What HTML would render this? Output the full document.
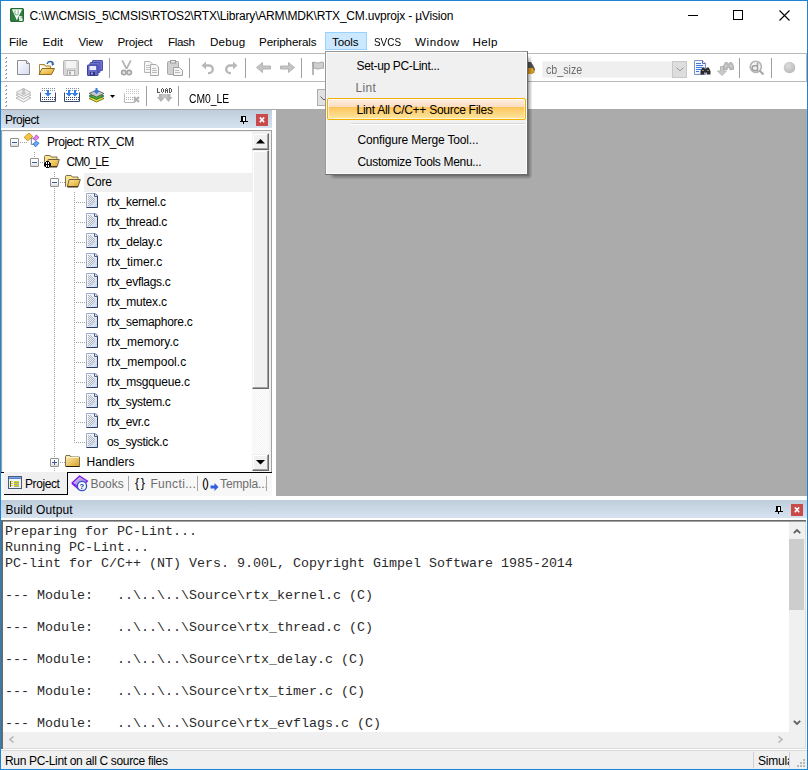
<!DOCTYPE html><html><head><meta charset="utf-8"><style>
*{margin:0;padding:0;box-sizing:border-box}
html,body{width:808px;height:770px;overflow:hidden;background:#fff}
body{font-family:"Liberation Sans",sans-serif;font-size:12px;color:#000;position:relative}
.a{position:absolute}
.t{position:absolute;white-space:nowrap;line-height:14px;font-size:12px}
.mono{position:absolute;font-family:"Liberation Mono",monospace;font-size:13.33px;line-height:16px;white-space:pre;color:#2a2a2a}
svg{position:absolute;overflow:visible}
</style></head><body>
<div class="a" style="left:0;top:0;width:808px;height:770px;border:1px solid #1c84d6;z-index:50;pointer-events:none"></div>
<svg style="left:10px;top:8px" width="14" height="14" viewBox="0 0 14 14"><rect x="0" y="0" width="14" height="14" rx="2" fill="#2f7d3d"/><rect x="0.5" y="0.5" width="13" height="13" rx="1.5" fill="none" stroke="#236b30"/><path d="M2 1.3h10.2L6.8 12.2z" fill="#fafdfa"/><path d="M5 2.2v4M8.2 2.2v4M5 6.2q1.6 1.6 3.2 0" fill="none" stroke="#7fb58a" stroke-width="1.1"/><path d="M12.2 8.9H9.7V10.8H11.9V12.4H9.2" fill="none" stroke="#fff" stroke-width="1.3"/></svg>
<div class="t" id="t1" style="left:29.5px;top:9px;font-size:12px;letter-spacing:-0.197px;">C:\W\CMSIS_5\CMSIS\RTOS2\RTX\Library\ARM\MDK\RTX_CM.uvprojx - µVision</div>
<div class="a" style="left:688px;top:15px;width:10px;height:1px;background:#000;"></div>
<div class="a" style="left:733px;top:10px;width:10px;height:10px;border:1px solid #000"></div>
<svg style="left:779px;top:10px" width="11" height="11" viewBox="0 0 11 11"><path d="M0.5 0.5L10.5 10.5M10.5 0.5L0.5 10.5" stroke="#000" stroke-width="1.1"/></svg>
<div class="a" style="left:325px;top:32px;width:42px;height:18px;background:#cce8ff;border:1px solid #99d1ff"></div>
<div class="t" id="t2" style="left:9.0px;top:35px;font-size:11.6px;letter-spacing:0.000px;">File</div>
<div class="t" id="t3" style="left:42.5px;top:35px;font-size:11.6px;letter-spacing:0.167px;">Edit</div>
<div class="t" id="t4" style="left:78.5px;top:35px;font-size:11.6px;letter-spacing:-0.167px;">View</div>
<div class="t" id="t5" style="left:117.5px;top:35px;font-size:11.6px;letter-spacing:-0.167px;">Project</div>
<div class="t" id="t6" style="left:168.0px;top:35px;font-size:11.6px;letter-spacing:-0.375px;">Flash</div>
<div class="t" id="t7" style="left:210.0px;top:35px;font-size:11.6px;letter-spacing:0.250px;">Debug</div>
<div class="t" id="t8" style="left:259.0px;top:35px;font-size:11.6px;letter-spacing:-0.100px;">Peripherals</div>
<div class="t" id="t9" style="left:332.0px;top:35px;font-size:11.6px;letter-spacing:-0.125px;">Tools</div>
<div class="t" id="t10" style="left:415.0px;top:35px;font-size:11.6px;letter-spacing:0.600px;">Window</div>
<div class="t" id="t11" style="left:472.5px;top:35px;font-size:11.6px;letter-spacing:0.334px;">Help</div>
<div class="t" id="t12" style="left:374px;top:35px;font-size:11.6px;transform:scaleX(0.855);transform-origin:0 0;">SVCS</div>
<div class="a" style="left:1px;top:53px;width:806px;height:1px;background:#b9b9b9;"></div>
<div class="a" style="left:1px;top:81px;width:805px;height:1px;background:#b9b9b9;"></div>
<div class="a" style="left:806px;top:53px;width:1px;height:29px;background:#b9b9b9;"></div>
<div class="a" style="left:1px;top:108px;width:806px;height:1px;background:#ffffff;"></div>
<div class="a" style="left:6px;top:57px;width:1px;height:1px;background:#8a8a8a;"></div>
<div class="a" style="left:5px;top:58px;width:1px;height:1px;background:#b0b0b0;"></div>
<div class="a" style="left:6px;top:58px;width:1px;height:1px;background:#c8c8c8;"></div>
<div class="a" style="left:6px;top:61px;width:1px;height:1px;background:#8a8a8a;"></div>
<div class="a" style="left:5px;top:62px;width:1px;height:1px;background:#b0b0b0;"></div>
<div class="a" style="left:6px;top:62px;width:1px;height:1px;background:#c8c8c8;"></div>
<div class="a" style="left:6px;top:65px;width:1px;height:1px;background:#8a8a8a;"></div>
<div class="a" style="left:5px;top:66px;width:1px;height:1px;background:#b0b0b0;"></div>
<div class="a" style="left:6px;top:66px;width:1px;height:1px;background:#c8c8c8;"></div>
<div class="a" style="left:6px;top:69px;width:1px;height:1px;background:#8a8a8a;"></div>
<div class="a" style="left:5px;top:70px;width:1px;height:1px;background:#b0b0b0;"></div>
<div class="a" style="left:6px;top:70px;width:1px;height:1px;background:#c8c8c8;"></div>
<div class="a" style="left:6px;top:73px;width:1px;height:1px;background:#8a8a8a;"></div>
<div class="a" style="left:5px;top:74px;width:1px;height:1px;background:#b0b0b0;"></div>
<div class="a" style="left:6px;top:74px;width:1px;height:1px;background:#c8c8c8;"></div>
<div class="a" style="left:6px;top:77px;width:1px;height:1px;background:#8a8a8a;"></div>
<div class="a" style="left:5px;top:78px;width:1px;height:1px;background:#b0b0b0;"></div>
<div class="a" style="left:6px;top:78px;width:1px;height:1px;background:#c8c8c8;"></div>
<div class="a" style="left:6px;top:85px;width:1px;height:1px;background:#8a8a8a;"></div>
<div class="a" style="left:5px;top:86px;width:1px;height:1px;background:#b0b0b0;"></div>
<div class="a" style="left:6px;top:86px;width:1px;height:1px;background:#c8c8c8;"></div>
<div class="a" style="left:6px;top:89px;width:1px;height:1px;background:#8a8a8a;"></div>
<div class="a" style="left:5px;top:90px;width:1px;height:1px;background:#b0b0b0;"></div>
<div class="a" style="left:6px;top:90px;width:1px;height:1px;background:#c8c8c8;"></div>
<div class="a" style="left:6px;top:93px;width:1px;height:1px;background:#8a8a8a;"></div>
<div class="a" style="left:5px;top:94px;width:1px;height:1px;background:#b0b0b0;"></div>
<div class="a" style="left:6px;top:94px;width:1px;height:1px;background:#c8c8c8;"></div>
<div class="a" style="left:6px;top:97px;width:1px;height:1px;background:#8a8a8a;"></div>
<div class="a" style="left:5px;top:98px;width:1px;height:1px;background:#b0b0b0;"></div>
<div class="a" style="left:6px;top:98px;width:1px;height:1px;background:#c8c8c8;"></div>
<div class="a" style="left:6px;top:101px;width:1px;height:1px;background:#8a8a8a;"></div>
<div class="a" style="left:5px;top:102px;width:1px;height:1px;background:#b0b0b0;"></div>
<div class="a" style="left:6px;top:102px;width:1px;height:1px;background:#c8c8c8;"></div>
<div class="a" style="left:6px;top:105px;width:1px;height:1px;background:#8a8a8a;"></div>
<div class="a" style="left:5px;top:106px;width:1px;height:1px;background:#b0b0b0;"></div>
<div class="a" style="left:6px;top:106px;width:1px;height:1px;background:#c8c8c8;"></div>
<div class="a" style="left:109px;top:58px;width:1px;height:20px;background:#a0a0a0;"></div>
<div class="a" style="left:189px;top:58px;width:1px;height:20px;background:#a0a0a0;"></div>
<div class="a" style="left:245px;top:58px;width:1px;height:20px;background:#a0a0a0;"></div>
<div class="a" style="left:301px;top:58px;width:1px;height:20px;background:#a0a0a0;"></div>
<div class="a" style="left:739px;top:58px;width:1px;height:20px;background:#a0a0a0;"></div>
<div class="a" style="left:771px;top:58px;width:1px;height:20px;background:#a0a0a0;"></div>
<div class="a" style="left:146px;top:86px;width:1px;height:20px;background:#a0a0a0;"></div>
<div class="a" style="left:178px;top:86px;width:1px;height:20px;background:#a0a0a0;"></div>
<div class="a" style="left:276px;top:110px;width:531px;height:386px;background:#ababab;"></div>
<div class="a" style="left:1px;top:109px;width:806px;height:1px;background:#a9a9a9;"></div>
<div class="a" style="left:1px;top:110px;width:271px;height:18px;background:linear-gradient(#bfcddb,#d6e2ef);"></div>
<div class="t" id="t13" style="left:5.0px;top:113px;font-size:12px;letter-spacing:-0.499px;">Project</div>
<svg style="left:240px;top:116px" width="8" height="8" viewBox="0 0 8 8"><path d="M1 0h5v5h-5z" fill="#000"/><path d="M3 1h2v4h-2z" fill="#fff"/><path d="M0 5h8v1h-8zM3 6h1v2h-1z" fill="#000"/></svg>
<div class="a" style="left:256px;top:114px;width:12px;height:12px;background:#c84a4a;"></div>
<svg style="left:256px;top:114px" width="12" height="12" viewBox="0 0 12 12"><path d="M3.8 3.4L8.2 8.2M8.2 3.4L3.8 8.2" stroke="#fff" stroke-width="1.6"/></svg>
<div class="a" style="left:1px;top:130px;width:271px;height:342px;background:#fff;border:1px solid #a0a0a0;border-bottom:none"></div>
<div class="a" style="left:2px;top:131px;width:269px;height:1px;background:#f0f0f0;"></div>
<div class="a" style="left:2px;top:131px;width:1px;height:341px;background:#f0f0f0;"></div>
<div class="a" style="left:269px;top:131px;width:2px;height:341px;background:#f0f0f0;"></div>
<div class="a" style="left:252px;top:132px;width:17px;height:1px;background:#f0f0f0;"></div>
<div class="a" style="left:1px;top:473px;width:271px;height:23px;background:#f7f7f7;"></div>
<div class="a" style="left:1px;top:500px;width:806px;height:18px;background:linear-gradient(#bfcddb,#d6e2ef);"></div>
<div class="t" id="t14" style="left:5.5px;top:503px;font-size:12px;letter-spacing:0.091px;">Build Output</div>
<svg style="left:775px;top:506px" width="8" height="8" viewBox="0 0 8 8"><path d="M1 0h5v5h-5z" fill="#000"/><path d="M3 1h2v4h-2z" fill="#fff"/><path d="M0 5h8v1h-8zM3 6h1v2h-1z" fill="#000"/></svg>
<div class="a" style="left:791px;top:504px;width:12px;height:12px;background:#c84a4a;"></div>
<svg style="left:791px;top:504px" width="12" height="12" viewBox="0 0 12 12"><path d="M3.8 3.4L8.2 8.2M8.2 3.4L3.8 8.2" stroke="#fff" stroke-width="1.6"/></svg>
<div class="a" style="left:1px;top:520px;width:805px;height:1px;background:#696969;"></div>
<div class="a" style="left:1px;top:521px;width:805px;height:1px;background:#a0a0a0;"></div>
<div class="a" style="left:1px;top:520px;width:2px;height:230px;background:#696969;"></div>
<div class="a" style="left:3px;top:522px;width:786px;height:210px;background:#fff;"></div>
<div class="mono" style="left:5px;top:524px">Preparing for PC-Lint...
Running PC-Lint...
PC-lint for C/C++ (NT) Vers. 9.00L, Copyright Gimpel Software 1985-2014

--- Module:   ..\..\..\Source\rtx_kernel.c (C)

--- Module:   ..\..\..\Source\rtx_thread.c (C)

--- Module:   ..\..\..\Source\rtx_delay.c (C)

--- Module:   ..\..\..\Source\rtx_timer.c (C)

--- Module:   ..\..\..\Source\rtx_evflags.c (C)</div>
<div class="a" style="left:789px;top:522px;width:16px;height:210px;background:#f0f0f0;"></div>
<div class="a" style="left:789px;top:539px;width:15px;height:71px;background:#cdcdcd;"></div>
<svg style="left:793px;top:528px" width="8" height="6" viewBox="0 0 8 6"><path d="M0.8 5.2L4 2L7.2 5.2" fill="none" stroke="#606060" stroke-width="1.8"/></svg>
<svg style="left:793px;top:720px" width="8" height="6" viewBox="0 0 8 6"><path d="M0.8 0.8L4 4L7.2 0.8" fill="none" stroke="#606060" stroke-width="1.8"/></svg>
<div class="a" style="left:3px;top:732px;width:802px;height:16px;background:#f0f0f0;"></div>
<svg style="left:8px;top:736px" width="7" height="7" viewBox="0 0 7 7"><path d="M5.5 0.5L2 3.5L5.5 6.5" fill="none" stroke="#b4b4b4" stroke-width="1.6"/></svg>
<svg style="left:777px;top:736px" width="7" height="7" viewBox="0 0 7 7"><path d="M1.5 0.5L5 3.5L1.5 6.5" fill="none" stroke="#b4b4b4" stroke-width="1.6"/></svg>
<div class="a" style="left:805px;top:522px;width:1px;height:227px;background:#dcdcdc;"></div>
<div class="a" style="left:3px;top:748px;width:803px;height:1px;background:#dcdcdc;"></div>
<div class="a" style="left:1px;top:749px;width:806px;height:20px;background:#f0f0f0;"></div>
<div class="a" style="left:1px;top:749px;width:806px;height:1px;background:#ffffff;"></div>
<div class="a" style="left:1px;top:750px;width:806px;height:1px;background:#d9d9d9;"></div>
<div class="t" id="t15" style="left:5.0px;top:754px;font-size:12px;letter-spacing:-0.328px;">Run PC-Lint on all C source files</div>
<div class="a" style="left:753px;top:752px;width:1px;height:16px;background:#d0d0d0;"></div>
<div class="a" style="left:789px;top:752px;width:1px;height:16px;background:#d0d0d0;"></div>
<div class="a" style="left:758px;top:754px;width:31px;overflow:hidden"><div class="t" style="position:static;font-size:12px;letter-spacing:-0.2px">Simulation</div></div>
<div class="a" style="left:803px;top:759px;width:2px;height:2px;background:#b8b8b8;"></div>
<div class="a" style="left:800px;top:762px;width:2px;height:2px;background:#b8b8b8;"></div>
<div class="a" style="left:803px;top:762px;width:2px;height:2px;background:#b8b8b8;"></div>
<div class="a" style="left:797px;top:765px;width:2px;height:2px;background:#b8b8b8;"></div>
<div class="a" style="left:800px;top:765px;width:2px;height:2px;background:#b8b8b8;"></div>
<div class="a" style="left:803px;top:765px;width:2px;height:2px;background:#b8b8b8;"></div>
<svg style="left:0;top:0" width="0" height="0"><defs><linearGradient id="gfo" x1="0" y1="0" x2="1" y2="1"><stop offset="0" stop-color="#fbe7a1"/><stop offset="1" stop-color="#e2a51d"/></linearGradient><linearGradient id="gfc" x1="0" y1="0" x2="1" y2="1"><stop offset="0" stop-color="#fdf0b8"/><stop offset="1" stop-color="#dca024"/></linearGradient><linearGradient id="gfi" x1="0" y1="0" x2="1" y2="1"><stop offset="0" stop-color="#ffffff"/><stop offset="1" stop-color="#c8d6f2"/></linearGradient></defs></svg>
<div class="a" style="left:84px;top:173px;width:168px;height:19px;background:#f0f0f0;"></div>
<div class="a" style="left:20px;top:142px;width:1px;height:1px;background:#a0a0a0;"></div>
<div class="a" style="left:22px;top:142px;width:1px;height:1px;background:#a0a0a0;"></div>
<div class="a" style="left:24px;top:142px;width:1px;height:1px;background:#a0a0a0;"></div>
<div class="a" style="left:26px;top:142px;width:1px;height:1px;background:#a0a0a0;"></div>
<div class="a" style="left:34px;top:152px;width:1px;height:1px;background:#a0a0a0;"></div>
<div class="a" style="left:34px;top:154px;width:1px;height:1px;background:#a0a0a0;"></div>
<div class="a" style="left:34px;top:156px;width:1px;height:1px;background:#a0a0a0;"></div>
<div class="a" style="left:40px;top:162px;width:1px;height:1px;background:#a0a0a0;"></div>
<div class="a" style="left:42px;top:162px;width:1px;height:1px;background:#a0a0a0;"></div>
<div class="a" style="left:44px;top:162px;width:1px;height:1px;background:#a0a0a0;"></div>
<div class="a" style="left:54px;top:172px;width:1px;height:1px;background:#a0a0a0;"></div>
<div class="a" style="left:54px;top:174px;width:1px;height:1px;background:#a0a0a0;"></div>
<div class="a" style="left:54px;top:176px;width:1px;height:1px;background:#a0a0a0;"></div>
<div class="a" style="left:60px;top:182px;width:1px;height:1px;background:#a0a0a0;"></div>
<div class="a" style="left:62px;top:182px;width:1px;height:1px;background:#a0a0a0;"></div>
<div class="a" style="left:64px;top:182px;width:1px;height:1px;background:#a0a0a0;"></div>
<div class="a" style="left:54px;top:188px;width:1px;height:1px;background:#a0a0a0;"></div>
<div class="a" style="left:54px;top:190px;width:1px;height:1px;background:#a0a0a0;"></div>
<div class="a" style="left:54px;top:192px;width:1px;height:1px;background:#a0a0a0;"></div>
<div class="a" style="left:54px;top:194px;width:1px;height:1px;background:#a0a0a0;"></div>
<div class="a" style="left:54px;top:196px;width:1px;height:1px;background:#a0a0a0;"></div>
<div class="a" style="left:54px;top:198px;width:1px;height:1px;background:#a0a0a0;"></div>
<div class="a" style="left:54px;top:200px;width:1px;height:1px;background:#a0a0a0;"></div>
<div class="a" style="left:54px;top:202px;width:1px;height:1px;background:#a0a0a0;"></div>
<div class="a" style="left:54px;top:204px;width:1px;height:1px;background:#a0a0a0;"></div>
<div class="a" style="left:54px;top:206px;width:1px;height:1px;background:#a0a0a0;"></div>
<div class="a" style="left:54px;top:208px;width:1px;height:1px;background:#a0a0a0;"></div>
<div class="a" style="left:54px;top:210px;width:1px;height:1px;background:#a0a0a0;"></div>
<div class="a" style="left:54px;top:212px;width:1px;height:1px;background:#a0a0a0;"></div>
<div class="a" style="left:54px;top:214px;width:1px;height:1px;background:#a0a0a0;"></div>
<div class="a" style="left:54px;top:216px;width:1px;height:1px;background:#a0a0a0;"></div>
<div class="a" style="left:54px;top:218px;width:1px;height:1px;background:#a0a0a0;"></div>
<div class="a" style="left:54px;top:220px;width:1px;height:1px;background:#a0a0a0;"></div>
<div class="a" style="left:54px;top:222px;width:1px;height:1px;background:#a0a0a0;"></div>
<div class="a" style="left:54px;top:224px;width:1px;height:1px;background:#a0a0a0;"></div>
<div class="a" style="left:54px;top:226px;width:1px;height:1px;background:#a0a0a0;"></div>
<div class="a" style="left:54px;top:228px;width:1px;height:1px;background:#a0a0a0;"></div>
<div class="a" style="left:54px;top:230px;width:1px;height:1px;background:#a0a0a0;"></div>
<div class="a" style="left:54px;top:232px;width:1px;height:1px;background:#a0a0a0;"></div>
<div class="a" style="left:54px;top:234px;width:1px;height:1px;background:#a0a0a0;"></div>
<div class="a" style="left:54px;top:236px;width:1px;height:1px;background:#a0a0a0;"></div>
<div class="a" style="left:54px;top:238px;width:1px;height:1px;background:#a0a0a0;"></div>
<div class="a" style="left:54px;top:240px;width:1px;height:1px;background:#a0a0a0;"></div>
<div class="a" style="left:54px;top:242px;width:1px;height:1px;background:#a0a0a0;"></div>
<div class="a" style="left:54px;top:244px;width:1px;height:1px;background:#a0a0a0;"></div>
<div class="a" style="left:54px;top:246px;width:1px;height:1px;background:#a0a0a0;"></div>
<div class="a" style="left:54px;top:248px;width:1px;height:1px;background:#a0a0a0;"></div>
<div class="a" style="left:54px;top:250px;width:1px;height:1px;background:#a0a0a0;"></div>
<div class="a" style="left:54px;top:252px;width:1px;height:1px;background:#a0a0a0;"></div>
<div class="a" style="left:54px;top:254px;width:1px;height:1px;background:#a0a0a0;"></div>
<div class="a" style="left:54px;top:256px;width:1px;height:1px;background:#a0a0a0;"></div>
<div class="a" style="left:54px;top:258px;width:1px;height:1px;background:#a0a0a0;"></div>
<div class="a" style="left:54px;top:260px;width:1px;height:1px;background:#a0a0a0;"></div>
<div class="a" style="left:54px;top:262px;width:1px;height:1px;background:#a0a0a0;"></div>
<div class="a" style="left:54px;top:264px;width:1px;height:1px;background:#a0a0a0;"></div>
<div class="a" style="left:54px;top:266px;width:1px;height:1px;background:#a0a0a0;"></div>
<div class="a" style="left:54px;top:268px;width:1px;height:1px;background:#a0a0a0;"></div>
<div class="a" style="left:54px;top:270px;width:1px;height:1px;background:#a0a0a0;"></div>
<div class="a" style="left:54px;top:272px;width:1px;height:1px;background:#a0a0a0;"></div>
<div class="a" style="left:54px;top:274px;width:1px;height:1px;background:#a0a0a0;"></div>
<div class="a" style="left:54px;top:276px;width:1px;height:1px;background:#a0a0a0;"></div>
<div class="a" style="left:54px;top:278px;width:1px;height:1px;background:#a0a0a0;"></div>
<div class="a" style="left:54px;top:280px;width:1px;height:1px;background:#a0a0a0;"></div>
<div class="a" style="left:54px;top:282px;width:1px;height:1px;background:#a0a0a0;"></div>
<div class="a" style="left:54px;top:284px;width:1px;height:1px;background:#a0a0a0;"></div>
<div class="a" style="left:54px;top:286px;width:1px;height:1px;background:#a0a0a0;"></div>
<div class="a" style="left:54px;top:288px;width:1px;height:1px;background:#a0a0a0;"></div>
<div class="a" style="left:54px;top:290px;width:1px;height:1px;background:#a0a0a0;"></div>
<div class="a" style="left:54px;top:292px;width:1px;height:1px;background:#a0a0a0;"></div>
<div class="a" style="left:54px;top:294px;width:1px;height:1px;background:#a0a0a0;"></div>
<div class="a" style="left:54px;top:296px;width:1px;height:1px;background:#a0a0a0;"></div>
<div class="a" style="left:54px;top:298px;width:1px;height:1px;background:#a0a0a0;"></div>
<div class="a" style="left:54px;top:300px;width:1px;height:1px;background:#a0a0a0;"></div>
<div class="a" style="left:54px;top:302px;width:1px;height:1px;background:#a0a0a0;"></div>
<div class="a" style="left:54px;top:304px;width:1px;height:1px;background:#a0a0a0;"></div>
<div class="a" style="left:54px;top:306px;width:1px;height:1px;background:#a0a0a0;"></div>
<div class="a" style="left:54px;top:308px;width:1px;height:1px;background:#a0a0a0;"></div>
<div class="a" style="left:54px;top:310px;width:1px;height:1px;background:#a0a0a0;"></div>
<div class="a" style="left:54px;top:312px;width:1px;height:1px;background:#a0a0a0;"></div>
<div class="a" style="left:54px;top:314px;width:1px;height:1px;background:#a0a0a0;"></div>
<div class="a" style="left:54px;top:316px;width:1px;height:1px;background:#a0a0a0;"></div>
<div class="a" style="left:54px;top:318px;width:1px;height:1px;background:#a0a0a0;"></div>
<div class="a" style="left:54px;top:320px;width:1px;height:1px;background:#a0a0a0;"></div>
<div class="a" style="left:54px;top:322px;width:1px;height:1px;background:#a0a0a0;"></div>
<div class="a" style="left:54px;top:324px;width:1px;height:1px;background:#a0a0a0;"></div>
<div class="a" style="left:54px;top:326px;width:1px;height:1px;background:#a0a0a0;"></div>
<div class="a" style="left:54px;top:328px;width:1px;height:1px;background:#a0a0a0;"></div>
<div class="a" style="left:54px;top:330px;width:1px;height:1px;background:#a0a0a0;"></div>
<div class="a" style="left:54px;top:332px;width:1px;height:1px;background:#a0a0a0;"></div>
<div class="a" style="left:54px;top:334px;width:1px;height:1px;background:#a0a0a0;"></div>
<div class="a" style="left:54px;top:336px;width:1px;height:1px;background:#a0a0a0;"></div>
<div class="a" style="left:54px;top:338px;width:1px;height:1px;background:#a0a0a0;"></div>
<div class="a" style="left:54px;top:340px;width:1px;height:1px;background:#a0a0a0;"></div>
<div class="a" style="left:54px;top:342px;width:1px;height:1px;background:#a0a0a0;"></div>
<div class="a" style="left:54px;top:344px;width:1px;height:1px;background:#a0a0a0;"></div>
<div class="a" style="left:54px;top:346px;width:1px;height:1px;background:#a0a0a0;"></div>
<div class="a" style="left:54px;top:348px;width:1px;height:1px;background:#a0a0a0;"></div>
<div class="a" style="left:54px;top:350px;width:1px;height:1px;background:#a0a0a0;"></div>
<div class="a" style="left:54px;top:352px;width:1px;height:1px;background:#a0a0a0;"></div>
<div class="a" style="left:54px;top:354px;width:1px;height:1px;background:#a0a0a0;"></div>
<div class="a" style="left:54px;top:356px;width:1px;height:1px;background:#a0a0a0;"></div>
<div class="a" style="left:54px;top:358px;width:1px;height:1px;background:#a0a0a0;"></div>
<div class="a" style="left:54px;top:360px;width:1px;height:1px;background:#a0a0a0;"></div>
<div class="a" style="left:54px;top:362px;width:1px;height:1px;background:#a0a0a0;"></div>
<div class="a" style="left:54px;top:364px;width:1px;height:1px;background:#a0a0a0;"></div>
<div class="a" style="left:54px;top:366px;width:1px;height:1px;background:#a0a0a0;"></div>
<div class="a" style="left:54px;top:368px;width:1px;height:1px;background:#a0a0a0;"></div>
<div class="a" style="left:54px;top:370px;width:1px;height:1px;background:#a0a0a0;"></div>
<div class="a" style="left:54px;top:372px;width:1px;height:1px;background:#a0a0a0;"></div>
<div class="a" style="left:54px;top:374px;width:1px;height:1px;background:#a0a0a0;"></div>
<div class="a" style="left:54px;top:376px;width:1px;height:1px;background:#a0a0a0;"></div>
<div class="a" style="left:54px;top:378px;width:1px;height:1px;background:#a0a0a0;"></div>
<div class="a" style="left:54px;top:380px;width:1px;height:1px;background:#a0a0a0;"></div>
<div class="a" style="left:54px;top:382px;width:1px;height:1px;background:#a0a0a0;"></div>
<div class="a" style="left:54px;top:384px;width:1px;height:1px;background:#a0a0a0;"></div>
<div class="a" style="left:54px;top:386px;width:1px;height:1px;background:#a0a0a0;"></div>
<div class="a" style="left:54px;top:388px;width:1px;height:1px;background:#a0a0a0;"></div>
<div class="a" style="left:54px;top:390px;width:1px;height:1px;background:#a0a0a0;"></div>
<div class="a" style="left:54px;top:392px;width:1px;height:1px;background:#a0a0a0;"></div>
<div class="a" style="left:54px;top:394px;width:1px;height:1px;background:#a0a0a0;"></div>
<div class="a" style="left:54px;top:396px;width:1px;height:1px;background:#a0a0a0;"></div>
<div class="a" style="left:54px;top:398px;width:1px;height:1px;background:#a0a0a0;"></div>
<div class="a" style="left:54px;top:400px;width:1px;height:1px;background:#a0a0a0;"></div>
<div class="a" style="left:54px;top:402px;width:1px;height:1px;background:#a0a0a0;"></div>
<div class="a" style="left:54px;top:404px;width:1px;height:1px;background:#a0a0a0;"></div>
<div class="a" style="left:54px;top:406px;width:1px;height:1px;background:#a0a0a0;"></div>
<div class="a" style="left:54px;top:408px;width:1px;height:1px;background:#a0a0a0;"></div>
<div class="a" style="left:54px;top:410px;width:1px;height:1px;background:#a0a0a0;"></div>
<div class="a" style="left:54px;top:412px;width:1px;height:1px;background:#a0a0a0;"></div>
<div class="a" style="left:54px;top:414px;width:1px;height:1px;background:#a0a0a0;"></div>
<div class="a" style="left:54px;top:416px;width:1px;height:1px;background:#a0a0a0;"></div>
<div class="a" style="left:54px;top:418px;width:1px;height:1px;background:#a0a0a0;"></div>
<div class="a" style="left:54px;top:420px;width:1px;height:1px;background:#a0a0a0;"></div>
<div class="a" style="left:54px;top:422px;width:1px;height:1px;background:#a0a0a0;"></div>
<div class="a" style="left:54px;top:424px;width:1px;height:1px;background:#a0a0a0;"></div>
<div class="a" style="left:54px;top:426px;width:1px;height:1px;background:#a0a0a0;"></div>
<div class="a" style="left:54px;top:428px;width:1px;height:1px;background:#a0a0a0;"></div>
<div class="a" style="left:54px;top:430px;width:1px;height:1px;background:#a0a0a0;"></div>
<div class="a" style="left:54px;top:432px;width:1px;height:1px;background:#a0a0a0;"></div>
<div class="a" style="left:54px;top:434px;width:1px;height:1px;background:#a0a0a0;"></div>
<div class="a" style="left:54px;top:436px;width:1px;height:1px;background:#a0a0a0;"></div>
<div class="a" style="left:54px;top:438px;width:1px;height:1px;background:#a0a0a0;"></div>
<div class="a" style="left:54px;top:440px;width:1px;height:1px;background:#a0a0a0;"></div>
<div class="a" style="left:54px;top:442px;width:1px;height:1px;background:#a0a0a0;"></div>
<div class="a" style="left:54px;top:444px;width:1px;height:1px;background:#a0a0a0;"></div>
<div class="a" style="left:54px;top:446px;width:1px;height:1px;background:#a0a0a0;"></div>
<div class="a" style="left:54px;top:448px;width:1px;height:1px;background:#a0a0a0;"></div>
<div class="a" style="left:54px;top:450px;width:1px;height:1px;background:#a0a0a0;"></div>
<div class="a" style="left:54px;top:452px;width:1px;height:1px;background:#a0a0a0;"></div>
<div class="a" style="left:54px;top:454px;width:1px;height:1px;background:#a0a0a0;"></div>
<div class="a" style="left:54px;top:456px;width:1px;height:1px;background:#a0a0a0;"></div>
<div class="a" style="left:54px;top:458px;width:1px;height:1px;background:#a0a0a0;"></div>
<div class="a" style="left:54px;top:460px;width:1px;height:1px;background:#a0a0a0;"></div>
<div class="a" style="left:54px;top:462px;width:1px;height:1px;background:#a0a0a0;"></div>
<div class="a" style="left:54px;top:464px;width:1px;height:1px;background:#a0a0a0;"></div>
<div class="a" style="left:54px;top:466px;width:1px;height:1px;background:#a0a0a0;"></div>
<div class="a" style="left:54px;top:468px;width:1px;height:1px;background:#a0a0a0;"></div>
<div class="a" style="left:54px;top:470px;width:1px;height:1px;background:#a0a0a0;"></div>
<div class="a" style="left:54px;top:472px;width:1px;height:1px;background:#a0a0a0;"></div>
<div class="a" style="left:74px;top:192px;width:1px;height:1px;background:#a0a0a0;"></div>
<div class="a" style="left:74px;top:194px;width:1px;height:1px;background:#a0a0a0;"></div>
<div class="a" style="left:74px;top:196px;width:1px;height:1px;background:#a0a0a0;"></div>
<div class="a" style="left:74px;top:198px;width:1px;height:1px;background:#a0a0a0;"></div>
<div class="a" style="left:74px;top:200px;width:1px;height:1px;background:#a0a0a0;"></div>
<div class="a" style="left:74px;top:202px;width:1px;height:1px;background:#a0a0a0;"></div>
<div class="a" style="left:74px;top:204px;width:1px;height:1px;background:#a0a0a0;"></div>
<div class="a" style="left:74px;top:206px;width:1px;height:1px;background:#a0a0a0;"></div>
<div class="a" style="left:74px;top:208px;width:1px;height:1px;background:#a0a0a0;"></div>
<div class="a" style="left:74px;top:210px;width:1px;height:1px;background:#a0a0a0;"></div>
<div class="a" style="left:74px;top:212px;width:1px;height:1px;background:#a0a0a0;"></div>
<div class="a" style="left:74px;top:214px;width:1px;height:1px;background:#a0a0a0;"></div>
<div class="a" style="left:74px;top:216px;width:1px;height:1px;background:#a0a0a0;"></div>
<div class="a" style="left:74px;top:218px;width:1px;height:1px;background:#a0a0a0;"></div>
<div class="a" style="left:74px;top:220px;width:1px;height:1px;background:#a0a0a0;"></div>
<div class="a" style="left:74px;top:222px;width:1px;height:1px;background:#a0a0a0;"></div>
<div class="a" style="left:74px;top:224px;width:1px;height:1px;background:#a0a0a0;"></div>
<div class="a" style="left:74px;top:226px;width:1px;height:1px;background:#a0a0a0;"></div>
<div class="a" style="left:74px;top:228px;width:1px;height:1px;background:#a0a0a0;"></div>
<div class="a" style="left:74px;top:230px;width:1px;height:1px;background:#a0a0a0;"></div>
<div class="a" style="left:74px;top:232px;width:1px;height:1px;background:#a0a0a0;"></div>
<div class="a" style="left:74px;top:234px;width:1px;height:1px;background:#a0a0a0;"></div>
<div class="a" style="left:74px;top:236px;width:1px;height:1px;background:#a0a0a0;"></div>
<div class="a" style="left:74px;top:238px;width:1px;height:1px;background:#a0a0a0;"></div>
<div class="a" style="left:74px;top:240px;width:1px;height:1px;background:#a0a0a0;"></div>
<div class="a" style="left:74px;top:242px;width:1px;height:1px;background:#a0a0a0;"></div>
<div class="a" style="left:74px;top:244px;width:1px;height:1px;background:#a0a0a0;"></div>
<div class="a" style="left:74px;top:246px;width:1px;height:1px;background:#a0a0a0;"></div>
<div class="a" style="left:74px;top:248px;width:1px;height:1px;background:#a0a0a0;"></div>
<div class="a" style="left:74px;top:250px;width:1px;height:1px;background:#a0a0a0;"></div>
<div class="a" style="left:74px;top:252px;width:1px;height:1px;background:#a0a0a0;"></div>
<div class="a" style="left:74px;top:254px;width:1px;height:1px;background:#a0a0a0;"></div>
<div class="a" style="left:74px;top:256px;width:1px;height:1px;background:#a0a0a0;"></div>
<div class="a" style="left:74px;top:258px;width:1px;height:1px;background:#a0a0a0;"></div>
<div class="a" style="left:74px;top:260px;width:1px;height:1px;background:#a0a0a0;"></div>
<div class="a" style="left:74px;top:262px;width:1px;height:1px;background:#a0a0a0;"></div>
<div class="a" style="left:74px;top:264px;width:1px;height:1px;background:#a0a0a0;"></div>
<div class="a" style="left:74px;top:266px;width:1px;height:1px;background:#a0a0a0;"></div>
<div class="a" style="left:74px;top:268px;width:1px;height:1px;background:#a0a0a0;"></div>
<div class="a" style="left:74px;top:270px;width:1px;height:1px;background:#a0a0a0;"></div>
<div class="a" style="left:74px;top:272px;width:1px;height:1px;background:#a0a0a0;"></div>
<div class="a" style="left:74px;top:274px;width:1px;height:1px;background:#a0a0a0;"></div>
<div class="a" style="left:74px;top:276px;width:1px;height:1px;background:#a0a0a0;"></div>
<div class="a" style="left:74px;top:278px;width:1px;height:1px;background:#a0a0a0;"></div>
<div class="a" style="left:74px;top:280px;width:1px;height:1px;background:#a0a0a0;"></div>
<div class="a" style="left:74px;top:282px;width:1px;height:1px;background:#a0a0a0;"></div>
<div class="a" style="left:74px;top:284px;width:1px;height:1px;background:#a0a0a0;"></div>
<div class="a" style="left:74px;top:286px;width:1px;height:1px;background:#a0a0a0;"></div>
<div class="a" style="left:74px;top:288px;width:1px;height:1px;background:#a0a0a0;"></div>
<div class="a" style="left:74px;top:290px;width:1px;height:1px;background:#a0a0a0;"></div>
<div class="a" style="left:74px;top:292px;width:1px;height:1px;background:#a0a0a0;"></div>
<div class="a" style="left:74px;top:294px;width:1px;height:1px;background:#a0a0a0;"></div>
<div class="a" style="left:74px;top:296px;width:1px;height:1px;background:#a0a0a0;"></div>
<div class="a" style="left:74px;top:298px;width:1px;height:1px;background:#a0a0a0;"></div>
<div class="a" style="left:74px;top:300px;width:1px;height:1px;background:#a0a0a0;"></div>
<div class="a" style="left:74px;top:302px;width:1px;height:1px;background:#a0a0a0;"></div>
<div class="a" style="left:74px;top:304px;width:1px;height:1px;background:#a0a0a0;"></div>
<div class="a" style="left:74px;top:306px;width:1px;height:1px;background:#a0a0a0;"></div>
<div class="a" style="left:74px;top:308px;width:1px;height:1px;background:#a0a0a0;"></div>
<div class="a" style="left:74px;top:310px;width:1px;height:1px;background:#a0a0a0;"></div>
<div class="a" style="left:74px;top:312px;width:1px;height:1px;background:#a0a0a0;"></div>
<div class="a" style="left:74px;top:314px;width:1px;height:1px;background:#a0a0a0;"></div>
<div class="a" style="left:74px;top:316px;width:1px;height:1px;background:#a0a0a0;"></div>
<div class="a" style="left:74px;top:318px;width:1px;height:1px;background:#a0a0a0;"></div>
<div class="a" style="left:74px;top:320px;width:1px;height:1px;background:#a0a0a0;"></div>
<div class="a" style="left:74px;top:322px;width:1px;height:1px;background:#a0a0a0;"></div>
<div class="a" style="left:74px;top:324px;width:1px;height:1px;background:#a0a0a0;"></div>
<div class="a" style="left:74px;top:326px;width:1px;height:1px;background:#a0a0a0;"></div>
<div class="a" style="left:74px;top:328px;width:1px;height:1px;background:#a0a0a0;"></div>
<div class="a" style="left:74px;top:330px;width:1px;height:1px;background:#a0a0a0;"></div>
<div class="a" style="left:74px;top:332px;width:1px;height:1px;background:#a0a0a0;"></div>
<div class="a" style="left:74px;top:334px;width:1px;height:1px;background:#a0a0a0;"></div>
<div class="a" style="left:74px;top:336px;width:1px;height:1px;background:#a0a0a0;"></div>
<div class="a" style="left:74px;top:338px;width:1px;height:1px;background:#a0a0a0;"></div>
<div class="a" style="left:74px;top:340px;width:1px;height:1px;background:#a0a0a0;"></div>
<div class="a" style="left:74px;top:342px;width:1px;height:1px;background:#a0a0a0;"></div>
<div class="a" style="left:74px;top:344px;width:1px;height:1px;background:#a0a0a0;"></div>
<div class="a" style="left:74px;top:346px;width:1px;height:1px;background:#a0a0a0;"></div>
<div class="a" style="left:74px;top:348px;width:1px;height:1px;background:#a0a0a0;"></div>
<div class="a" style="left:74px;top:350px;width:1px;height:1px;background:#a0a0a0;"></div>
<div class="a" style="left:74px;top:352px;width:1px;height:1px;background:#a0a0a0;"></div>
<div class="a" style="left:74px;top:354px;width:1px;height:1px;background:#a0a0a0;"></div>
<div class="a" style="left:74px;top:356px;width:1px;height:1px;background:#a0a0a0;"></div>
<div class="a" style="left:74px;top:358px;width:1px;height:1px;background:#a0a0a0;"></div>
<div class="a" style="left:74px;top:360px;width:1px;height:1px;background:#a0a0a0;"></div>
<div class="a" style="left:74px;top:362px;width:1px;height:1px;background:#a0a0a0;"></div>
<div class="a" style="left:74px;top:364px;width:1px;height:1px;background:#a0a0a0;"></div>
<div class="a" style="left:74px;top:366px;width:1px;height:1px;background:#a0a0a0;"></div>
<div class="a" style="left:74px;top:368px;width:1px;height:1px;background:#a0a0a0;"></div>
<div class="a" style="left:74px;top:370px;width:1px;height:1px;background:#a0a0a0;"></div>
<div class="a" style="left:74px;top:372px;width:1px;height:1px;background:#a0a0a0;"></div>
<div class="a" style="left:74px;top:374px;width:1px;height:1px;background:#a0a0a0;"></div>
<div class="a" style="left:74px;top:376px;width:1px;height:1px;background:#a0a0a0;"></div>
<div class="a" style="left:74px;top:378px;width:1px;height:1px;background:#a0a0a0;"></div>
<div class="a" style="left:74px;top:380px;width:1px;height:1px;background:#a0a0a0;"></div>
<div class="a" style="left:74px;top:382px;width:1px;height:1px;background:#a0a0a0;"></div>
<div class="a" style="left:74px;top:384px;width:1px;height:1px;background:#a0a0a0;"></div>
<div class="a" style="left:74px;top:386px;width:1px;height:1px;background:#a0a0a0;"></div>
<div class="a" style="left:74px;top:388px;width:1px;height:1px;background:#a0a0a0;"></div>
<div class="a" style="left:74px;top:390px;width:1px;height:1px;background:#a0a0a0;"></div>
<div class="a" style="left:74px;top:392px;width:1px;height:1px;background:#a0a0a0;"></div>
<div class="a" style="left:74px;top:394px;width:1px;height:1px;background:#a0a0a0;"></div>
<div class="a" style="left:74px;top:396px;width:1px;height:1px;background:#a0a0a0;"></div>
<div class="a" style="left:74px;top:398px;width:1px;height:1px;background:#a0a0a0;"></div>
<div class="a" style="left:74px;top:400px;width:1px;height:1px;background:#a0a0a0;"></div>
<div class="a" style="left:74px;top:402px;width:1px;height:1px;background:#a0a0a0;"></div>
<div class="a" style="left:74px;top:404px;width:1px;height:1px;background:#a0a0a0;"></div>
<div class="a" style="left:74px;top:406px;width:1px;height:1px;background:#a0a0a0;"></div>
<div class="a" style="left:74px;top:408px;width:1px;height:1px;background:#a0a0a0;"></div>
<div class="a" style="left:74px;top:410px;width:1px;height:1px;background:#a0a0a0;"></div>
<div class="a" style="left:74px;top:412px;width:1px;height:1px;background:#a0a0a0;"></div>
<div class="a" style="left:74px;top:414px;width:1px;height:1px;background:#a0a0a0;"></div>
<div class="a" style="left:74px;top:416px;width:1px;height:1px;background:#a0a0a0;"></div>
<div class="a" style="left:74px;top:418px;width:1px;height:1px;background:#a0a0a0;"></div>
<div class="a" style="left:74px;top:420px;width:1px;height:1px;background:#a0a0a0;"></div>
<div class="a" style="left:74px;top:422px;width:1px;height:1px;background:#a0a0a0;"></div>
<div class="a" style="left:74px;top:424px;width:1px;height:1px;background:#a0a0a0;"></div>
<div class="a" style="left:74px;top:426px;width:1px;height:1px;background:#a0a0a0;"></div>
<div class="a" style="left:74px;top:428px;width:1px;height:1px;background:#a0a0a0;"></div>
<div class="a" style="left:74px;top:430px;width:1px;height:1px;background:#a0a0a0;"></div>
<div class="a" style="left:74px;top:432px;width:1px;height:1px;background:#a0a0a0;"></div>
<div class="a" style="left:74px;top:434px;width:1px;height:1px;background:#a0a0a0;"></div>
<div class="a" style="left:74px;top:436px;width:1px;height:1px;background:#a0a0a0;"></div>
<div class="a" style="left:74px;top:438px;width:1px;height:1px;background:#a0a0a0;"></div>
<div class="a" style="left:74px;top:440px;width:1px;height:1px;background:#a0a0a0;"></div>
<div class="a" style="left:74px;top:442px;width:1px;height:1px;background:#a0a0a0;"></div>
<div class="a" style="left:76px;top:202px;width:1px;height:1px;background:#a0a0a0;"></div>
<div class="a" style="left:78px;top:202px;width:1px;height:1px;background:#a0a0a0;"></div>
<div class="a" style="left:80px;top:202px;width:1px;height:1px;background:#a0a0a0;"></div>
<div class="a" style="left:82px;top:202px;width:1px;height:1px;background:#a0a0a0;"></div>
<div class="a" style="left:84px;top:202px;width:1px;height:1px;background:#a0a0a0;"></div>
<div class="a" style="left:76px;top:222px;width:1px;height:1px;background:#a0a0a0;"></div>
<div class="a" style="left:78px;top:222px;width:1px;height:1px;background:#a0a0a0;"></div>
<div class="a" style="left:80px;top:222px;width:1px;height:1px;background:#a0a0a0;"></div>
<div class="a" style="left:82px;top:222px;width:1px;height:1px;background:#a0a0a0;"></div>
<div class="a" style="left:84px;top:222px;width:1px;height:1px;background:#a0a0a0;"></div>
<div class="a" style="left:76px;top:242px;width:1px;height:1px;background:#a0a0a0;"></div>
<div class="a" style="left:78px;top:242px;width:1px;height:1px;background:#a0a0a0;"></div>
<div class="a" style="left:80px;top:242px;width:1px;height:1px;background:#a0a0a0;"></div>
<div class="a" style="left:82px;top:242px;width:1px;height:1px;background:#a0a0a0;"></div>
<div class="a" style="left:84px;top:242px;width:1px;height:1px;background:#a0a0a0;"></div>
<div class="a" style="left:76px;top:262px;width:1px;height:1px;background:#a0a0a0;"></div>
<div class="a" style="left:78px;top:262px;width:1px;height:1px;background:#a0a0a0;"></div>
<div class="a" style="left:80px;top:262px;width:1px;height:1px;background:#a0a0a0;"></div>
<div class="a" style="left:82px;top:262px;width:1px;height:1px;background:#a0a0a0;"></div>
<div class="a" style="left:84px;top:262px;width:1px;height:1px;background:#a0a0a0;"></div>
<div class="a" style="left:76px;top:282px;width:1px;height:1px;background:#a0a0a0;"></div>
<div class="a" style="left:78px;top:282px;width:1px;height:1px;background:#a0a0a0;"></div>
<div class="a" style="left:80px;top:282px;width:1px;height:1px;background:#a0a0a0;"></div>
<div class="a" style="left:82px;top:282px;width:1px;height:1px;background:#a0a0a0;"></div>
<div class="a" style="left:84px;top:282px;width:1px;height:1px;background:#a0a0a0;"></div>
<div class="a" style="left:76px;top:302px;width:1px;height:1px;background:#a0a0a0;"></div>
<div class="a" style="left:78px;top:302px;width:1px;height:1px;background:#a0a0a0;"></div>
<div class="a" style="left:80px;top:302px;width:1px;height:1px;background:#a0a0a0;"></div>
<div class="a" style="left:82px;top:302px;width:1px;height:1px;background:#a0a0a0;"></div>
<div class="a" style="left:84px;top:302px;width:1px;height:1px;background:#a0a0a0;"></div>
<div class="a" style="left:76px;top:322px;width:1px;height:1px;background:#a0a0a0;"></div>
<div class="a" style="left:78px;top:322px;width:1px;height:1px;background:#a0a0a0;"></div>
<div class="a" style="left:80px;top:322px;width:1px;height:1px;background:#a0a0a0;"></div>
<div class="a" style="left:82px;top:322px;width:1px;height:1px;background:#a0a0a0;"></div>
<div class="a" style="left:84px;top:322px;width:1px;height:1px;background:#a0a0a0;"></div>
<div class="a" style="left:76px;top:342px;width:1px;height:1px;background:#a0a0a0;"></div>
<div class="a" style="left:78px;top:342px;width:1px;height:1px;background:#a0a0a0;"></div>
<div class="a" style="left:80px;top:342px;width:1px;height:1px;background:#a0a0a0;"></div>
<div class="a" style="left:82px;top:342px;width:1px;height:1px;background:#a0a0a0;"></div>
<div class="a" style="left:84px;top:342px;width:1px;height:1px;background:#a0a0a0;"></div>
<div class="a" style="left:76px;top:362px;width:1px;height:1px;background:#a0a0a0;"></div>
<div class="a" style="left:78px;top:362px;width:1px;height:1px;background:#a0a0a0;"></div>
<div class="a" style="left:80px;top:362px;width:1px;height:1px;background:#a0a0a0;"></div>
<div class="a" style="left:82px;top:362px;width:1px;height:1px;background:#a0a0a0;"></div>
<div class="a" style="left:84px;top:362px;width:1px;height:1px;background:#a0a0a0;"></div>
<div class="a" style="left:76px;top:382px;width:1px;height:1px;background:#a0a0a0;"></div>
<div class="a" style="left:78px;top:382px;width:1px;height:1px;background:#a0a0a0;"></div>
<div class="a" style="left:80px;top:382px;width:1px;height:1px;background:#a0a0a0;"></div>
<div class="a" style="left:82px;top:382px;width:1px;height:1px;background:#a0a0a0;"></div>
<div class="a" style="left:84px;top:382px;width:1px;height:1px;background:#a0a0a0;"></div>
<div class="a" style="left:76px;top:402px;width:1px;height:1px;background:#a0a0a0;"></div>
<div class="a" style="left:78px;top:402px;width:1px;height:1px;background:#a0a0a0;"></div>
<div class="a" style="left:80px;top:402px;width:1px;height:1px;background:#a0a0a0;"></div>
<div class="a" style="left:82px;top:402px;width:1px;height:1px;background:#a0a0a0;"></div>
<div class="a" style="left:84px;top:402px;width:1px;height:1px;background:#a0a0a0;"></div>
<div class="a" style="left:76px;top:422px;width:1px;height:1px;background:#a0a0a0;"></div>
<div class="a" style="left:78px;top:422px;width:1px;height:1px;background:#a0a0a0;"></div>
<div class="a" style="left:80px;top:422px;width:1px;height:1px;background:#a0a0a0;"></div>
<div class="a" style="left:82px;top:422px;width:1px;height:1px;background:#a0a0a0;"></div>
<div class="a" style="left:84px;top:422px;width:1px;height:1px;background:#a0a0a0;"></div>
<div class="a" style="left:76px;top:442px;width:1px;height:1px;background:#a0a0a0;"></div>
<div class="a" style="left:78px;top:442px;width:1px;height:1px;background:#a0a0a0;"></div>
<div class="a" style="left:80px;top:442px;width:1px;height:1px;background:#a0a0a0;"></div>
<div class="a" style="left:82px;top:442px;width:1px;height:1px;background:#a0a0a0;"></div>
<div class="a" style="left:84px;top:442px;width:1px;height:1px;background:#a0a0a0;"></div>
<div class="a" style="left:60px;top:462px;width:1px;height:1px;background:#a0a0a0;"></div>
<div class="a" style="left:62px;top:462px;width:1px;height:1px;background:#a0a0a0;"></div>
<div class="a" style="left:64px;top:462px;width:1px;height:1px;background:#a0a0a0;"></div>
<div class="a" style="left:10px;top:138px;width:9px;height:9px;border:1px solid #8f8f8f;border-radius:1px;background:linear-gradient(#fff,#fff 40%,#dcdcdc)"></div>
<div class="a" style="left:12px;top:142px;width:5px;height:1px;background:#3a5aa8;"></div>
<div class="a" style="left:30px;top:158px;width:9px;height:9px;border:1px solid #8f8f8f;border-radius:1px;background:linear-gradient(#fff,#fff 40%,#dcdcdc)"></div>
<div class="a" style="left:32px;top:162px;width:5px;height:1px;background:#3a5aa8;"></div>
<div class="a" style="left:50px;top:178px;width:9px;height:9px;border:1px solid #8f8f8f;border-radius:1px;background:linear-gradient(#fff,#fff 40%,#dcdcdc)"></div>
<div class="a" style="left:52px;top:182px;width:5px;height:1px;background:#3a5aa8;"></div>
<div class="a" style="left:50px;top:458px;width:9px;height:9px;border:1px solid #8f8f8f;border-radius:1px;background:linear-gradient(#fff,#fff 40%,#dcdcdc)"></div>
<div class="a" style="left:52px;top:462px;width:5px;height:1px;background:#3a5aa8;"></div>
<div class="a" style="left:54px;top:460px;width:1px;height:5px;background:#3a5aa8;"></div>
<svg style="left:20px;top:130px" width="24" height="20" viewBox="0 0 24 20"><path d="M4.1 7.4L9 3L12.8 6.5L7.7 10.8z" fill="#f2c640" stroke="#b88a10" stroke-width="0.8"/><path d="M14 8.2h-2.7v6.2H14" fill="none" stroke="#6a7a9a" stroke-width="1"/><path d="M13.3 9L16.3 4.9L19 7.4L15.5 10.6z" fill="#f07ef0" stroke="#a040b0" stroke-width="0.8"/><path d="M13.3 13.6L16.3 11.2L19 13.3L15.5 16.9z" fill="#6aaef6" stroke="#2060c0" stroke-width="0.8"/></svg>
<div class="t" id="t16" style="left:47.0px;top:135px;;letter-spacing:-0.429px;">Project: RTX_CM</div>
<svg style="left:44px;top:155px" width="16" height="13" viewBox="0 0 16 13"><path d="M0.5 11.8V1.5L1.2 0.5h5l1 1.5h5.8v3" fill="#fbe38a" stroke="#7d6e55"/><path d="M2.3 11.8L4.2 4.5H15.3L13 11.8z" fill="url(#gfo)" stroke="#6f5f45"/><path d="M2.5 11.8H13" stroke="#2a2010"/></svg>
<svg style="left:44px;top:161px" width="7" height="7" viewBox="0 0 7 7"><rect x="2" y="0" width="1" height="1" fill="#000"/><rect x="3" y="0" width="1" height="1" fill="#000"/><rect x="4" y="0" width="1" height="1" fill="#000"/><rect x="1" y="1" width="1" height="1" fill="#000"/><rect x="2" y="1" width="1" height="1" fill="#fff"/><rect x="3" y="1" width="1" height="1" fill="#000"/><rect x="4" y="1" width="1" height="1" fill="#fff"/><rect x="5" y="1" width="1" height="1" fill="#000"/><rect x="0" y="2" width="1" height="1" fill="#000"/><rect x="1" y="2" width="1" height="1" fill="#000"/><rect x="2" y="2" width="1" height="1" fill="#fff"/><rect x="3" y="2" width="1" height="1" fill="#000"/><rect x="4" y="2" width="1" height="1" fill="#fff"/><rect x="5" y="2" width="1" height="1" fill="#000"/><rect x="6" y="2" width="1" height="1" fill="#000"/><rect x="0" y="3" width="1" height="1" fill="#000"/><rect x="1" y="3" width="1" height="1" fill="#000"/><rect x="2" y="3" width="1" height="1" fill="#000"/><rect x="3" y="3" width="1" height="1" fill="#000"/><rect x="4" y="3" width="1" height="1" fill="#000"/><rect x="5" y="3" width="1" height="1" fill="#000"/><rect x="6" y="3" width="1" height="1" fill="#000"/><rect x="0" y="4" width="1" height="1" fill="#000"/><rect x="1" y="4" width="1" height="1" fill="#000"/><rect x="2" y="4" width="1" height="1" fill="#fff"/><rect x="3" y="4" width="1" height="1" fill="#000"/><rect x="4" y="4" width="1" height="1" fill="#fff"/><rect x="5" y="4" width="1" height="1" fill="#000"/><rect x="6" y="4" width="1" height="1" fill="#000"/><rect x="1" y="5" width="1" height="1" fill="#000"/><rect x="2" y="5" width="1" height="1" fill="#fff"/><rect x="3" y="5" width="1" height="1" fill="#000"/><rect x="4" y="5" width="1" height="1" fill="#fff"/><rect x="5" y="5" width="1" height="1" fill="#000"/><rect x="2" y="6" width="1" height="1" fill="#000"/><rect x="3" y="6" width="1" height="1" fill="#000"/><rect x="4" y="6" width="1" height="1" fill="#000"/></svg>
<div class="t" id="t17" style="left:66.5px;top:155px;;letter-spacing:-0.800px;">CM0_LE</div>
<svg style="left:65px;top:175px" width="16" height="13" viewBox="0 0 16 13"><path d="M0.5 11.8V1.5L1.2 0.5h5l1 1.5h5.8v3" fill="#fbe38a" stroke="#7d6e55"/><path d="M2.3 11.8L4.2 4.5H15.3L13 11.8z" fill="url(#gfo)" stroke="#6f5f45"/><path d="M2.5 11.8H13" stroke="#2a2010"/></svg>
<div class="t" id="t18" style="left:86.5px;top:175px;;letter-spacing:-0.167px;">Core</div>
<svg style="left:86px;top:193px" width="12" height="15" viewBox="0 0 12 15"><rect x="0.5" y="0.5" width="11" height="14" fill="url(#gfi)"/><path d="M0.5 14.5V0.5h8.5" fill="none" stroke="#9aaccc"/><path d="M9 0.5l2.5 2.5v11.5H0.5" fill="none" stroke="#2c3c5c"/><path d="M8.5 0.5v3h3" fill="#e8eefc" stroke="#4c5c7c"/><path d="M2 2h1v1h-1zM4 2h1v1h-1zM3 3h1v1h-1zM5 3h1v1h-1zM2 4h1v1h-1zM4 4h1v1h-1zM6 4h1v1h-1zM3 5h1v1h-1zM5 5h1v1h-1zM7 5h1v1h-1zM2 6h1v1h-1zM4 6h1v1h-1zM6 6h1v1h-1zM8 6h1v1h-1zM3 7h1v1h-1zM5 7h1v1h-1zM7 7h1v1h-1zM2 8h1v1h-1zM4 8h1v1h-1zM6 8h1v1h-1zM8 8h1v1h-1zM3 9h1v1h-1zM5 9h1v1h-1zM7 9h1v1h-1zM2 10h1v1h-1zM4 10h1v1h-1zM6 10h1v1h-1zM3 11h1v1h-1zM5 11h1v1h-1zM2 12h1v1h-1zM4 12h1v1h-1z" fill="#b4b4b4"/></svg>
<div class="t" id="t19" style="left:107.0px;top:195px;;letter-spacing:-0.274px;">rtx_kernel.c</div>
<svg style="left:86px;top:213px" width="12" height="15" viewBox="0 0 12 15"><rect x="0.5" y="0.5" width="11" height="14" fill="url(#gfi)"/><path d="M0.5 14.5V0.5h8.5" fill="none" stroke="#9aaccc"/><path d="M9 0.5l2.5 2.5v11.5H0.5" fill="none" stroke="#2c3c5c"/><path d="M8.5 0.5v3h3" fill="#e8eefc" stroke="#4c5c7c"/><path d="M2 2h1v1h-1zM4 2h1v1h-1zM3 3h1v1h-1zM5 3h1v1h-1zM2 4h1v1h-1zM4 4h1v1h-1zM6 4h1v1h-1zM3 5h1v1h-1zM5 5h1v1h-1zM7 5h1v1h-1zM2 6h1v1h-1zM4 6h1v1h-1zM6 6h1v1h-1zM8 6h1v1h-1zM3 7h1v1h-1zM5 7h1v1h-1zM7 7h1v1h-1zM2 8h1v1h-1zM4 8h1v1h-1zM6 8h1v1h-1zM8 8h1v1h-1zM3 9h1v1h-1zM5 9h1v1h-1zM7 9h1v1h-1zM2 10h1v1h-1zM4 10h1v1h-1zM6 10h1v1h-1zM3 11h1v1h-1zM5 11h1v1h-1zM2 12h1v1h-1zM4 12h1v1h-1z" fill="#b4b4b4"/></svg>
<div class="t" id="t20" style="left:107.0px;top:215px;;letter-spacing:-0.273px;">rtx_thread.c</div>
<svg style="left:86px;top:233px" width="12" height="15" viewBox="0 0 12 15"><rect x="0.5" y="0.5" width="11" height="14" fill="url(#gfi)"/><path d="M0.5 14.5V0.5h8.5" fill="none" stroke="#9aaccc"/><path d="M9 0.5l2.5 2.5v11.5H0.5" fill="none" stroke="#2c3c5c"/><path d="M8.5 0.5v3h3" fill="#e8eefc" stroke="#4c5c7c"/><path d="M2 2h1v1h-1zM4 2h1v1h-1zM3 3h1v1h-1zM5 3h1v1h-1zM2 4h1v1h-1zM4 4h1v1h-1zM6 4h1v1h-1zM3 5h1v1h-1zM5 5h1v1h-1zM7 5h1v1h-1zM2 6h1v1h-1zM4 6h1v1h-1zM6 6h1v1h-1zM8 6h1v1h-1zM3 7h1v1h-1zM5 7h1v1h-1zM7 7h1v1h-1zM2 8h1v1h-1zM4 8h1v1h-1zM6 8h1v1h-1zM8 8h1v1h-1zM3 9h1v1h-1zM5 9h1v1h-1zM7 9h1v1h-1zM2 10h1v1h-1zM4 10h1v1h-1zM6 10h1v1h-1zM3 11h1v1h-1zM5 11h1v1h-1zM2 12h1v1h-1zM4 12h1v1h-1z" fill="#b4b4b4"/></svg>
<div class="t" id="t21" style="left:107.0px;top:235px;;letter-spacing:-0.200px;">rtx_delay.c</div>
<svg style="left:86px;top:253px" width="12" height="15" viewBox="0 0 12 15"><rect x="0.5" y="0.5" width="11" height="14" fill="url(#gfi)"/><path d="M0.5 14.5V0.5h8.5" fill="none" stroke="#9aaccc"/><path d="M9 0.5l2.5 2.5v11.5H0.5" fill="none" stroke="#2c3c5c"/><path d="M8.5 0.5v3h3" fill="#e8eefc" stroke="#4c5c7c"/><path d="M2 2h1v1h-1zM4 2h1v1h-1zM3 3h1v1h-1zM5 3h1v1h-1zM2 4h1v1h-1zM4 4h1v1h-1zM6 4h1v1h-1zM3 5h1v1h-1zM5 5h1v1h-1zM7 5h1v1h-1zM2 6h1v1h-1zM4 6h1v1h-1zM6 6h1v1h-1zM8 6h1v1h-1zM3 7h1v1h-1zM5 7h1v1h-1zM7 7h1v1h-1zM2 8h1v1h-1zM4 8h1v1h-1zM6 8h1v1h-1zM8 8h1v1h-1zM3 9h1v1h-1zM5 9h1v1h-1zM7 9h1v1h-1zM2 10h1v1h-1zM4 10h1v1h-1zM6 10h1v1h-1zM3 11h1v1h-1zM5 11h1v1h-1zM2 12h1v1h-1zM4 12h1v1h-1z" fill="#b4b4b4"/></svg>
<div class="t" id="t22" style="left:107.0px;top:255px;;letter-spacing:0.000px;">rtx_timer.c</div>
<svg style="left:86px;top:273px" width="12" height="15" viewBox="0 0 12 15"><rect x="0.5" y="0.5" width="11" height="14" fill="url(#gfi)"/><path d="M0.5 14.5V0.5h8.5" fill="none" stroke="#9aaccc"/><path d="M9 0.5l2.5 2.5v11.5H0.5" fill="none" stroke="#2c3c5c"/><path d="M8.5 0.5v3h3" fill="#e8eefc" stroke="#4c5c7c"/><path d="M2 2h1v1h-1zM4 2h1v1h-1zM3 3h1v1h-1zM5 3h1v1h-1zM2 4h1v1h-1zM4 4h1v1h-1zM6 4h1v1h-1zM3 5h1v1h-1zM5 5h1v1h-1zM7 5h1v1h-1zM2 6h1v1h-1zM4 6h1v1h-1zM6 6h1v1h-1zM8 6h1v1h-1zM3 7h1v1h-1zM5 7h1v1h-1zM7 7h1v1h-1zM2 8h1v1h-1zM4 8h1v1h-1zM6 8h1v1h-1zM8 8h1v1h-1zM3 9h1v1h-1zM5 9h1v1h-1zM7 9h1v1h-1zM2 10h1v1h-1zM4 10h1v1h-1zM6 10h1v1h-1zM3 11h1v1h-1zM5 11h1v1h-1zM2 12h1v1h-1zM4 12h1v1h-1z" fill="#b4b4b4"/></svg>
<div class="t" id="t23" style="left:107.0px;top:275px;;letter-spacing:-0.292px;">rtx_evflags.c</div>
<svg style="left:86px;top:293px" width="12" height="15" viewBox="0 0 12 15"><rect x="0.5" y="0.5" width="11" height="14" fill="url(#gfi)"/><path d="M0.5 14.5V0.5h8.5" fill="none" stroke="#9aaccc"/><path d="M9 0.5l2.5 2.5v11.5H0.5" fill="none" stroke="#2c3c5c"/><path d="M8.5 0.5v3h3" fill="#e8eefc" stroke="#4c5c7c"/><path d="M2 2h1v1h-1zM4 2h1v1h-1zM3 3h1v1h-1zM5 3h1v1h-1zM2 4h1v1h-1zM4 4h1v1h-1zM6 4h1v1h-1zM3 5h1v1h-1zM5 5h1v1h-1zM7 5h1v1h-1zM2 6h1v1h-1zM4 6h1v1h-1zM6 6h1v1h-1zM8 6h1v1h-1zM3 7h1v1h-1zM5 7h1v1h-1zM7 7h1v1h-1zM2 8h1v1h-1zM4 8h1v1h-1zM6 8h1v1h-1zM8 8h1v1h-1zM3 9h1v1h-1zM5 9h1v1h-1zM7 9h1v1h-1zM2 10h1v1h-1zM4 10h1v1h-1zM6 10h1v1h-1zM3 11h1v1h-1zM5 11h1v1h-1zM2 12h1v1h-1zM4 12h1v1h-1z" fill="#b4b4b4"/></svg>
<div class="t" id="t24" style="left:107.0px;top:295px;;letter-spacing:-0.200px;">rtx_mutex.c</div>
<svg style="left:86px;top:313px" width="12" height="15" viewBox="0 0 12 15"><rect x="0.5" y="0.5" width="11" height="14" fill="url(#gfi)"/><path d="M0.5 14.5V0.5h8.5" fill="none" stroke="#9aaccc"/><path d="M9 0.5l2.5 2.5v11.5H0.5" fill="none" stroke="#2c3c5c"/><path d="M8.5 0.5v3h3" fill="#e8eefc" stroke="#4c5c7c"/><path d="M2 2h1v1h-1zM4 2h1v1h-1zM3 3h1v1h-1zM5 3h1v1h-1zM2 4h1v1h-1zM4 4h1v1h-1zM6 4h1v1h-1zM3 5h1v1h-1zM5 5h1v1h-1zM7 5h1v1h-1zM2 6h1v1h-1zM4 6h1v1h-1zM6 6h1v1h-1zM8 6h1v1h-1zM3 7h1v1h-1zM5 7h1v1h-1zM7 7h1v1h-1zM2 8h1v1h-1zM4 8h1v1h-1zM6 8h1v1h-1zM8 8h1v1h-1zM3 9h1v1h-1zM5 9h1v1h-1zM7 9h1v1h-1zM2 10h1v1h-1zM4 10h1v1h-1zM6 10h1v1h-1zM3 11h1v1h-1zM5 11h1v1h-1zM2 12h1v1h-1zM4 12h1v1h-1z" fill="#b4b4b4"/></svg>
<div class="t" id="t25" style="left:107.0px;top:315px;;letter-spacing:-0.251px;">rtx_semaphore.c</div>
<svg style="left:86px;top:333px" width="12" height="15" viewBox="0 0 12 15"><rect x="0.5" y="0.5" width="11" height="14" fill="url(#gfi)"/><path d="M0.5 14.5V0.5h8.5" fill="none" stroke="#9aaccc"/><path d="M9 0.5l2.5 2.5v11.5H0.5" fill="none" stroke="#2c3c5c"/><path d="M8.5 0.5v3h3" fill="#e8eefc" stroke="#4c5c7c"/><path d="M2 2h1v1h-1zM4 2h1v1h-1zM3 3h1v1h-1zM5 3h1v1h-1zM2 4h1v1h-1zM4 4h1v1h-1zM6 4h1v1h-1zM3 5h1v1h-1zM5 5h1v1h-1zM7 5h1v1h-1zM2 6h1v1h-1zM4 6h1v1h-1zM6 6h1v1h-1zM8 6h1v1h-1zM3 7h1v1h-1zM5 7h1v1h-1zM7 7h1v1h-1zM2 8h1v1h-1zM4 8h1v1h-1zM6 8h1v1h-1zM8 8h1v1h-1zM3 9h1v1h-1zM5 9h1v1h-1zM7 9h1v1h-1zM2 10h1v1h-1zM4 10h1v1h-1zM6 10h1v1h-1zM3 11h1v1h-1zM5 11h1v1h-1zM2 12h1v1h-1zM4 12h1v1h-1z" fill="#b4b4b4"/></svg>
<div class="t" id="t26" style="left:107.0px;top:335px;;letter-spacing:-0.002px;">rtx_memory.c</div>
<svg style="left:86px;top:353px" width="12" height="15" viewBox="0 0 12 15"><rect x="0.5" y="0.5" width="11" height="14" fill="url(#gfi)"/><path d="M0.5 14.5V0.5h8.5" fill="none" stroke="#9aaccc"/><path d="M9 0.5l2.5 2.5v11.5H0.5" fill="none" stroke="#2c3c5c"/><path d="M8.5 0.5v3h3" fill="#e8eefc" stroke="#4c5c7c"/><path d="M2 2h1v1h-1zM4 2h1v1h-1zM3 3h1v1h-1zM5 3h1v1h-1zM2 4h1v1h-1zM4 4h1v1h-1zM6 4h1v1h-1zM3 5h1v1h-1zM5 5h1v1h-1zM7 5h1v1h-1zM2 6h1v1h-1zM4 6h1v1h-1zM6 6h1v1h-1zM8 6h1v1h-1zM3 7h1v1h-1zM5 7h1v1h-1zM7 7h1v1h-1zM2 8h1v1h-1zM4 8h1v1h-1zM6 8h1v1h-1zM8 8h1v1h-1zM3 9h1v1h-1zM5 9h1v1h-1zM7 9h1v1h-1zM2 10h1v1h-1zM4 10h1v1h-1zM6 10h1v1h-1zM3 11h1v1h-1zM5 11h1v1h-1zM2 12h1v1h-1zM4 12h1v1h-1z" fill="#b4b4b4"/></svg>
<div class="t" id="t27" style="left:107.0px;top:355px;;letter-spacing:0.042px;">rtx_mempool.c</div>
<svg style="left:86px;top:373px" width="12" height="15" viewBox="0 0 12 15"><rect x="0.5" y="0.5" width="11" height="14" fill="url(#gfi)"/><path d="M0.5 14.5V0.5h8.5" fill="none" stroke="#9aaccc"/><path d="M9 0.5l2.5 2.5v11.5H0.5" fill="none" stroke="#2c3c5c"/><path d="M8.5 0.5v3h3" fill="#e8eefc" stroke="#4c5c7c"/><path d="M2 2h1v1h-1zM4 2h1v1h-1zM3 3h1v1h-1zM5 3h1v1h-1zM2 4h1v1h-1zM4 4h1v1h-1zM6 4h1v1h-1zM3 5h1v1h-1zM5 5h1v1h-1zM7 5h1v1h-1zM2 6h1v1h-1zM4 6h1v1h-1zM6 6h1v1h-1zM8 6h1v1h-1zM3 7h1v1h-1zM5 7h1v1h-1zM7 7h1v1h-1zM2 8h1v1h-1zM4 8h1v1h-1zM6 8h1v1h-1zM8 8h1v1h-1zM3 9h1v1h-1zM5 9h1v1h-1zM7 9h1v1h-1zM2 10h1v1h-1zM4 10h1v1h-1zM6 10h1v1h-1zM3 11h1v1h-1zM5 11h1v1h-1zM2 12h1v1h-1zM4 12h1v1h-1z" fill="#b4b4b4"/></svg>
<div class="t" id="t28" style="left:107.0px;top:375px;;letter-spacing:-0.191px;">rtx_msgqueue.c</div>
<svg style="left:86px;top:393px" width="12" height="15" viewBox="0 0 12 15"><rect x="0.5" y="0.5" width="11" height="14" fill="url(#gfi)"/><path d="M0.5 14.5V0.5h8.5" fill="none" stroke="#9aaccc"/><path d="M9 0.5l2.5 2.5v11.5H0.5" fill="none" stroke="#2c3c5c"/><path d="M8.5 0.5v3h3" fill="#e8eefc" stroke="#4c5c7c"/><path d="M2 2h1v1h-1zM4 2h1v1h-1zM3 3h1v1h-1zM5 3h1v1h-1zM2 4h1v1h-1zM4 4h1v1h-1zM6 4h1v1h-1zM3 5h1v1h-1zM5 5h1v1h-1zM7 5h1v1h-1zM2 6h1v1h-1zM4 6h1v1h-1zM6 6h1v1h-1zM8 6h1v1h-1zM3 7h1v1h-1zM5 7h1v1h-1zM7 7h1v1h-1zM2 8h1v1h-1zM4 8h1v1h-1zM6 8h1v1h-1zM8 8h1v1h-1zM3 9h1v1h-1zM5 9h1v1h-1zM7 9h1v1h-1zM2 10h1v1h-1zM4 10h1v1h-1zM6 10h1v1h-1zM3 11h1v1h-1zM5 11h1v1h-1zM2 12h1v1h-1zM4 12h1v1h-1z" fill="#b4b4b4"/></svg>
<div class="t" id="t29" style="left:107.0px;top:395px;;letter-spacing:-0.319px;">rtx_system.c</div>
<svg style="left:86px;top:413px" width="12" height="15" viewBox="0 0 12 15"><rect x="0.5" y="0.5" width="11" height="14" fill="url(#gfi)"/><path d="M0.5 14.5V0.5h8.5" fill="none" stroke="#9aaccc"/><path d="M9 0.5l2.5 2.5v11.5H0.5" fill="none" stroke="#2c3c5c"/><path d="M8.5 0.5v3h3" fill="#e8eefc" stroke="#4c5c7c"/><path d="M2 2h1v1h-1zM4 2h1v1h-1zM3 3h1v1h-1zM5 3h1v1h-1zM2 4h1v1h-1zM4 4h1v1h-1zM6 4h1v1h-1zM3 5h1v1h-1zM5 5h1v1h-1zM7 5h1v1h-1zM2 6h1v1h-1zM4 6h1v1h-1zM6 6h1v1h-1zM8 6h1v1h-1zM3 7h1v1h-1zM5 7h1v1h-1zM7 7h1v1h-1zM2 8h1v1h-1zM4 8h1v1h-1zM6 8h1v1h-1zM8 8h1v1h-1zM3 9h1v1h-1zM5 9h1v1h-1zM7 9h1v1h-1zM2 10h1v1h-1zM4 10h1v1h-1zM6 10h1v1h-1zM3 11h1v1h-1zM5 11h1v1h-1zM2 12h1v1h-1zM4 12h1v1h-1z" fill="#b4b4b4"/></svg>
<div class="t" id="t30" style="left:107.0px;top:415px;;letter-spacing:-0.315px;">rtx_evr.c</div>
<svg style="left:86px;top:433px" width="12" height="15" viewBox="0 0 12 15"><rect x="0.5" y="0.5" width="11" height="14" fill="url(#gfi)"/><path d="M0.5 14.5V0.5h8.5" fill="none" stroke="#9aaccc"/><path d="M9 0.5l2.5 2.5v11.5H0.5" fill="none" stroke="#2c3c5c"/><path d="M8.5 0.5v3h3" fill="#e8eefc" stroke="#4c5c7c"/><path d="M2 2h1v1h-1zM4 2h1v1h-1zM3 3h1v1h-1zM5 3h1v1h-1zM2 4h1v1h-1zM4 4h1v1h-1zM6 4h1v1h-1zM3 5h1v1h-1zM5 5h1v1h-1zM7 5h1v1h-1zM2 6h1v1h-1zM4 6h1v1h-1zM6 6h1v1h-1zM8 6h1v1h-1zM3 7h1v1h-1zM5 7h1v1h-1zM7 7h1v1h-1zM2 8h1v1h-1zM4 8h1v1h-1zM6 8h1v1h-1zM8 8h1v1h-1zM3 9h1v1h-1zM5 9h1v1h-1zM7 9h1v1h-1zM2 10h1v1h-1zM4 10h1v1h-1zM6 10h1v1h-1zM3 11h1v1h-1zM5 11h1v1h-1zM2 12h1v1h-1zM4 12h1v1h-1z" fill="#b4b4b4"/></svg>
<div class="t" id="t31" style="left:107.0px;top:435px;;letter-spacing:-0.319px;">os_systick.c</div>
<svg style="left:65px;top:455px" width="15" height="12" viewBox="0 0 15 12"><path d="M0.5 11.5V1.2L1 0.5h4l1 1.5h8.5v9.5z" fill="url(#gfc)" stroke="#7d6e55"/><path d="M1 11.5h13.5" stroke="#2a2010"/><path d="M1.5 2.5h12.5" stroke="#fff3c0"/></svg>
<div class="t" id="t32" style="left:86.5px;top:455px;;letter-spacing:-0.001px;">Handlers</div>
<div class="a" style="left:252px;top:133px;width:17px;height:339px;background:repeating-conic-gradient(#f4f4f4 0 25%,#fdfdfd 0 50%) 0 0/2px 2px;"></div>
<div class="a" style="left:252px;top:133px;width:17px;height:17px;background:#f0f0f0;border-top:1px solid #f0f0f0;border-left:1px solid #f0f0f0;border-right:1px solid #696969;border-bottom:1px solid #696969;box-shadow:inset -1px -1px 0 #a0a0a0,inset 1px 1px 0 #fff"></div>
<svg style="left:256px;top:139px" width="9" height="5" viewBox="0 0 9 5"><path d="M0 4.5h9L4.5 0z" fill="#000"/></svg>
<div class="a" style="left:252px;top:150px;width:17px;height:239px;background:#f0f0f0;border-top:1px solid #f0f0f0;border-left:1px solid #f0f0f0;border-right:1px solid #696969;border-bottom:1px solid #696969;box-shadow:inset -1px -1px 0 #a0a0a0,inset 1px 1px 0 #fff"></div>
<div class="a" style="left:252px;top:454px;width:17px;height:17px;background:#f0f0f0;border-top:1px solid #f0f0f0;border-left:1px solid #f0f0f0;border-right:1px solid #696969;border-bottom:1px solid #696969;box-shadow:inset -1px -1px 0 #a0a0a0,inset 1px 1px 0 #fff"></div>
<svg style="left:256px;top:460px" width="9" height="5" viewBox="0 0 9 5"><path d="M0 0h9L4.5 4.5z" fill="#000"/></svg>
<div class="a" style="left:67px;top:472px;width:205px;height:1px;background:#000;"></div>
<div class="a" style="left:1px;top:472px;width:3px;height:1px;background:#000;"></div>
<div class="a" style="left:4px;top:472px;width:63px;height:22px;background:#f0f0f0;"></div>
<div class="a" style="left:67px;top:472px;width:1px;height:23px;background:#000;"></div>
<div class="a" style="left:4px;top:494px;width:64px;height:1px;background:#000;"></div>
<svg style="left:8px;top:476px" width="14" height="13" viewBox="0 0 14 13"><defs><linearGradient id="gtab" x1="0" y1="0" x2="0" y2="1"><stop offset="0" stop-color="#8fb4f0"/><stop offset="1" stop-color="#3f6fc8"/></linearGradient></defs><rect x="0.5" y="0.5" width="13" height="12" fill="#eef2fa" stroke="#4a5a7a"/><rect x="1" y="1" width="12" height="2" fill="url(#gtab)"/><path d="M2.5 5v6" stroke="#606030"/><path d="M3 5.5h2M3 7.5h2M3 9.5h2M6 5.5h5M6 7.5h5M6 9.5h5" stroke="#d8d820" stroke-width="1"/><path d="M6 6.5h5M6 8.5h5M6 10.5h5" stroke="#707040" stroke-width="0.6"/></svg>
<div class="t" id="t33" style="left:25.0px;top:477px;;letter-spacing:-0.417px;">Project</div>
<svg style="left:71px;top:475px" width="18" height="16" viewBox="0 0 18 16"><defs><linearGradient id="gbk" x1="0" y1="0" x2="1" y2="1"><stop offset="0" stop-color="#d8c8f8"/><stop offset="1" stop-color="#8870d0"/></linearGradient></defs><path d="M1 8L8.5 1L16.5 6L9 13z" fill="url(#gbk)" stroke="#7a10f0" stroke-width="1.1"/><path d="M1 8.5L8.5 15" stroke="#7a10f0" stroke-width="1.1"/><circle cx="11" cy="11" r="4.6" fill="#f4f8ff" stroke="#2c50c8" stroke-width="1.3"/><text x="8.6" y="14" font-size="7.5" fill="#1c3080" font-family="Liberation Sans" font-weight="bold">?</text></svg>
<div class="t" id="t34" style="left:90.4px;top:477px;color:#6d6d6d;letter-spacing:0.000px;">Books</div>
<div class="a" style="left:128px;top:476px;width:1px;height:15px;background:#a8a8a8;"></div>
<div class="t" id="t35" style="left:135px;top:476px;font-size:12.5px;letter-spacing:-1px;">{ }</div>
<div class="t" id="t36" style="left:150.4px;top:477px;color:#6d6d6d;letter-spacing:0.350px;">Functi...</div>
<div class="a" style="left:197px;top:476px;width:1px;height:15px;background:#a8a8a8;"></div>
<div class="t" id="t37" style="left:202px;top:476px;font-size:12.5px;letter-spacing:-1.5px;">()</div>
<svg style="left:210px;top:483px" width="9" height="8" viewBox="0 0 9 8"><path d="M0.5 2.5h4v-2.5l4 4-4 4v-2.5h-4z" fill="#2f5fe0"/></svg>
<div class="t" id="t38" style="left:220.0px;top:477px;color:#6d6d6d;letter-spacing:-0.100px;">Templa...</div>
<div class="a" style="left:266px;top:476px;width:1px;height:15px;background:#a8a8a8;"></div>
<svg style="left:16px;top:59px" width="15" height="17" viewBox="0 0 15 17"><defs><linearGradient id="gnew" x1="0" y1="0" x2="1" y2="1"><stop offset="0" stop-color="#ffffff"/><stop offset="1" stop-color="#d4dcf0"/></linearGradient></defs><path d="M1.5 1.5h9l3 3v11h-12z" fill="url(#gnew)" stroke="#8c8c8c"/><path d="M10.5 1.5v3h3" fill="#e8e8e8" stroke="#8c8c8c"/></svg>
<svg style="left:38px;top:60px" width="18" height="16" viewBox="0 0 18 16"><path d="M1.5 4.5h5l1 1.5h5v3" fill="#f8dc8a" stroke="#a8863a"/><path d="M1.5 4.5v10" stroke="#a8863a"/><path d="M1 14.5l3-6h12.5l-3 6z" fill="url(#gfo)" stroke="#8e6c20"/><path d="M9 4c1-3 5-3.5 6.5-0.5" fill="none" stroke="#2f5fa8" stroke-width="1.3"/><path d="M13.5 2.5l3 1.5-2.5 2z" fill="#2f5fa8"/></svg>
<svg style="left:63px;top:60px" width="16" height="16" viewBox="0 0 16 16"><rect x="0.5" y="0.5" width="15" height="15" rx="1" fill="#d6d6d6" stroke="#b4b4b4"/><rect x="3" y="1" width="10" height="7" fill="#f4f4f4"/><rect x="4.5" y="10.5" width="7" height="5" fill="#f4f4f4" stroke="#b0b0b0"/><rect x="6" y="11.5" width="2" height="3" fill="#a8a8a8"/></svg>
<svg style="left:87px;top:60px" width="16" height="16" viewBox="0 0 16 16"><rect x="5.5" y="0.5" width="10" height="10" rx="0.5" fill="#7478d8" stroke="#4a4ea8"/><rect x="3" y="2.5" width="10" height="10" rx="0.5" fill="#6c70d0" stroke="#4a4ea8"/><rect x="0.5" y="5" width="10.5" height="10.5" rx="0.5" fill="#6468c8" stroke="#3c4098"/><rect x="2.5" y="6" width="6.5" height="4" fill="#e8eaff"/><rect x="3" y="12" width="5" height="3.5" fill="#30347a"/><rect x="4" y="12.5" width="2" height="2" fill="#9aa0e0"/></svg>
<svg style="left:121px;top:60px" width="11" height="16" viewBox="0 0 11 16"><path d="M1.2 0.3L5.5 8.8M9.8 0.3L5.5 8.8" stroke="#b4b4b4" stroke-width="1.8"/><circle cx="2.8" cy="12.6" r="2.2" fill="#e6e6e6" stroke="#a4a4a4" stroke-width="1.6"/><circle cx="8.2" cy="12.6" r="2.2" fill="#e6e6e6" stroke="#a4a4a4" stroke-width="1.6"/></svg>
<svg style="left:144px;top:61px" width="15" height="15" viewBox="0 0 15 15"><path d="M0.5 0.5h5.5l2.5 2.5v8.5h-8z" fill="#f6f6f6" stroke="#b4b4b4"/><path d="M2 4.5h4M2 6.5h4M2 8.5h4" stroke="#c4c4c4"/><path d="M6.5 3.5h5.5l2.5 2.5v8.5h-8z" fill="#f6f6f6" stroke="#a8a8a8"/><path d="M8 7.5h4M8 9.5h5M8 11.5h5" stroke="#bcbcbc"/></svg>
<svg style="left:167px;top:60px" width="16" height="16" viewBox="0 0 16 16"><rect x="0.5" y="1.5" width="11" height="13" rx="1" fill="#d0d0d0" stroke="#a8a8a8"/><rect x="3.5" y="0.5" width="5" height="2.5" fill="#ececec" stroke="#9c9c9c"/><path d="M6.5 7.5h6l3 3v5h-9z" fill="#f4f4f4" stroke="#a0a0a0"/><path d="M8 10.5h4M8 12.5h5" stroke="#bcbcbc"/></svg>
<svg style="left:201px;top:61px" width="13" height="14" viewBox="0 0 13 14"><path d="M4 4.5h4a3.8 3.8 0 0 1 0 7.6h-1" fill="none" stroke="#b8b8b8" stroke-width="2.4"/><path d="M0.5 4.5l4.5-4v8z" fill="#b8b8b8"/></svg>
<svg style="left:225px;top:61px" width="13" height="14" viewBox="0 0 13 14"><path d="M9 4.5h-4a3.8 3.8 0 0 0 0 7.6h1" fill="none" stroke="#b8b8b8" stroke-width="2.4"/><path d="M12.5 4.5l-4.5-4v8z" fill="#b8b8b8"/></svg>
<svg style="left:256px;top:62px" width="15" height="11" viewBox="0 0 15 11"><path d="M0.5 5.5l6-5v3.5h8v3h-8v3.5z" fill="#c4c4c4" stroke="#b4b4b4"/></svg>
<svg style="left:280px;top:62px" width="15" height="11" viewBox="0 0 15 11"><path d="M14.5 5.5l-6-5v3.5h-8v3h8v3.5z" fill="#c4c4c4" stroke="#b4b4b4"/></svg>
<svg style="left:311px;top:61px" width="14" height="14" viewBox="0 0 14 14"><path d="M1.5 1.5c3-1 4 1 6 0.5s3-1.5 5-0.5v6c-2-1-3 0-5 0.5s-3-1.5-5-0.5z" fill="#cfcfcf" stroke="#a8a8a8"/><path d="M2 1v13" stroke="#a0a0a0" stroke-width="1.5"/></svg>
<svg style="left:528px;top:61px" width="8" height="13" viewBox="0 0 8 13"><path d="M0 1h3l2 3 2 4-1 4h-6z" fill="#555"/><path d="M0 7h5l1 3-1 3h-5z" fill="#e0a020"/></svg>
<div class="a" style="left:542px;top:61px;width:145px;height:17px;background:#efefef;border:1px solid #f5f5f5"></div>
<div class="t" id="t39" style="left:545.8px;top:63px;color:#6d6d6d;transform:scaleX(0.89);transform-origin:0 0;">cb_size</div>
<div class="a" style="left:672px;top:61px;width:15px;height:17px;background:#dddddd;border:1px solid #c8c8c8"></div>
<svg style="left:676px;top:67px" width="8" height="5" viewBox="0 0 8 5"><path d="M0.5 0.5l3.5 3.5 3.5-3.5" fill="none" stroke="#9a9a9a"/></svg>
<svg style="left:694px;top:60px" width="16" height="16" viewBox="0 0 16 16"><defs><linearGradient id="gdoc" x1="0" y1="0" x2="1" y2="1"><stop offset="0" stop-color="#fff"/><stop offset="1" stop-color="#dfe7f7"/></linearGradient></defs><path d="M0.5 0.5h8l3 3v11h-11z" fill="url(#gdoc)" stroke="#7f93bf"/><path d="M8.5 0.5v3h3" fill="#e6ecf8" stroke="#5a6e9a"/><path d="M2 3.5h5M2 5.5h7M2 7.5h6M2 9.5h5M2 11.5h3" stroke="#3a78e0" stroke-width="1"/><path d="M6.5 14.5v-3.5l1.8-3.5h2l0.7 1.5h1l0.7-1.5h2l1.8 3.5v3.5h-3.8v-2h-2.4v2z" fill="#2a2a2a"/><path d="M8.3 10.5h1.5M13.2 10.5h1.5" stroke="#aaa" stroke-width="1"/></svg>
<svg style="left:717px;top:60px" width="16" height="16" viewBox="0 0 16 16"><path d="M3.5 6.5v4.5h-3l4.5 4.5 4.5-4.5h-3v-4.5z" fill="#c8c8c8" stroke="#b8b8b8"/><path d="M6.5 9.5v-3.5l1.8-3.5h2l0.7 1.5h1l0.7-1.5h2l1.8 3.5v3.5h-3.8v-2h-2.4v2z" fill="#bdbdbd" stroke="#a8a8a8" stroke-width="0.8"/><path d="M8.3 6h1.5M13.2 6h1.5" stroke="#eee"/></svg>
<svg style="left:749px;top:60px" width="16" height="16" viewBox="0 0 16 16"><circle cx="6.8" cy="6.8" r="5.6" fill="#f2f2f2" stroke="#b4b4b4" stroke-width="1.6"/><path d="M10.5 10.5l4 4" stroke="#a8a8a8" stroke-width="2.2"/><path d="M8.5 2.5v8h-3a2.4 2.4 0 0 1 0-4.8h3" fill="none" stroke="#a0a0a0" stroke-width="1.5"/></svg>
<svg style="left:783px;top:61px" width="13" height="13" viewBox="0 0 13 13"><defs><radialGradient id="gcir" cx="0.4" cy="0.35" r="0.7"><stop offset="0" stop-color="#dcdcdc"/><stop offset="1" stop-color="#b8b8b8"/></radialGradient></defs><circle cx="6.5" cy="6.5" r="5.8" fill="url(#gcir)"/></svg>
<svg style="left:15px;top:88px" width="17" height="15" viewBox="0 0 17 15"><path d="M1 10l7.5-4 7.5 4-7.5 4z" fill="#f4f4f4" stroke="#b8b8b8"/><path d="M1 7l7.5-4 7.5 4-7.5 4z" fill="#f4f4f4" stroke="#b8b8b8"/><path d="M1 4.5l7.5-4 7.5 4-7.5 4z" fill="#f0f0f0" stroke="#b8b8b8"/><path d="M7 0.5v4h-2l3.5 3 3.5-3h-2v-4z" fill="#c4c4c4"/></svg>
<svg style="left:40px;top:87px" width="16" height="15" viewBox="0 0 16 15"><path d="M0.5 5.5v9h15v-9" fill="none" stroke="#3a4a6a"/><rect x="2" y="1" width="1" height="1" fill="#8090a8"/><rect x="4" y="1" width="1" height="1" fill="#8090a8"/><rect x="6" y="1" width="1" height="1" fill="#8090a8"/><rect x="8" y="1" width="1" height="1" fill="#8090a8"/><rect x="10" y="1" width="1" height="1" fill="#8090a8"/><rect x="12" y="1" width="1" height="1" fill="#8090a8"/><rect x="14" y="1" width="1" height="1" fill="#8090a8"/><rect x="2" y="3" width="1" height="1" fill="#8090a8"/><rect x="4" y="3" width="1" height="1" fill="#8090a8"/><rect x="6" y="3" width="1" height="1" fill="#8090a8"/><rect x="8" y="3" width="1" height="1" fill="#8090a8"/><rect x="10" y="3" width="1" height="1" fill="#8090a8"/><rect x="12" y="3" width="1" height="1" fill="#8090a8"/><rect x="14" y="3" width="1" height="1" fill="#8090a8"/><rect x="2" y="10" width="1" height="1" fill="#3a4a6a"/><rect x="4" y="10" width="1" height="1" fill="#3a4a6a"/><rect x="6" y="10" width="1" height="1" fill="#3a4a6a"/><rect x="8" y="10" width="1" height="1" fill="#3a4a6a"/><rect x="10" y="10" width="1" height="1" fill="#3a4a6a"/><rect x="12" y="10" width="1" height="1" fill="#3a4a6a"/><rect x="14" y="10" width="1" height="1" fill="#3a4a6a"/><rect x="2" y="12" width="1" height="1" fill="#3a4a6a"/><rect x="4" y="12" width="1" height="1" fill="#3a4a6a"/><rect x="6" y="12" width="1" height="1" fill="#3a4a6a"/><rect x="8" y="12" width="1" height="1" fill="#3a4a6a"/><rect x="10" y="12" width="1" height="1" fill="#3a4a6a"/><rect x="12" y="12" width="1" height="1" fill="#3a4a6a"/><rect x="14" y="12" width="1" height="1" fill="#3a4a6a"/><path d="M7 3h2v3h2.5l-3.5 3.5-3.5-3.5h2.5z" fill="#2f7de8"/></svg>
<svg style="left:64px;top:87px" width="16" height="15" viewBox="0 0 16 15"><path d="M0.5 5.5v9h15v-9" fill="none" stroke="#3a4a6a"/><rect x="2" y="1" width="1" height="1" fill="#8090a8"/><rect x="4" y="1" width="1" height="1" fill="#8090a8"/><rect x="6" y="1" width="1" height="1" fill="#8090a8"/><rect x="8" y="1" width="1" height="1" fill="#8090a8"/><rect x="10" y="1" width="1" height="1" fill="#8090a8"/><rect x="12" y="1" width="1" height="1" fill="#8090a8"/><rect x="14" y="1" width="1" height="1" fill="#8090a8"/><rect x="2" y="3" width="1" height="1" fill="#8090a8"/><rect x="4" y="3" width="1" height="1" fill="#8090a8"/><rect x="6" y="3" width="1" height="1" fill="#8090a8"/><rect x="8" y="3" width="1" height="1" fill="#8090a8"/><rect x="10" y="3" width="1" height="1" fill="#8090a8"/><rect x="12" y="3" width="1" height="1" fill="#8090a8"/><rect x="14" y="3" width="1" height="1" fill="#8090a8"/><rect x="2" y="10" width="1" height="1" fill="#3a4a6a"/><rect x="4" y="10" width="1" height="1" fill="#3a4a6a"/><rect x="6" y="10" width="1" height="1" fill="#3a4a6a"/><rect x="8" y="10" width="1" height="1" fill="#3a4a6a"/><rect x="10" y="10" width="1" height="1" fill="#3a4a6a"/><rect x="12" y="10" width="1" height="1" fill="#3a4a6a"/><rect x="14" y="10" width="1" height="1" fill="#3a4a6a"/><rect x="2" y="12" width="1" height="1" fill="#3a4a6a"/><rect x="4" y="12" width="1" height="1" fill="#3a4a6a"/><rect x="6" y="12" width="1" height="1" fill="#3a4a6a"/><rect x="8" y="12" width="1" height="1" fill="#3a4a6a"/><rect x="10" y="12" width="1" height="1" fill="#3a4a6a"/><rect x="12" y="12" width="1" height="1" fill="#3a4a6a"/><rect x="14" y="12" width="1" height="1" fill="#3a4a6a"/><path d="M4 3h2v3h2.5l-3.5 3.5-3.5-3.5h2.5z" fill="#2f7de8"/><path d="M10 3h2v3h2.5l-3.5 3.5-3.5-3.5h2.5z" fill="#2f7de8"/></svg>
<svg style="left:88px;top:88px" width="17" height="15" viewBox="0 0 17 15"><path d="M1 10.5l7.5-3.5 7.5 3.5-7.5 3.5z" fill="#e8e030" stroke="#606020" stroke-width="0.8"/><path d="M1 8l7.5-3.5 7.5 3.5-7.5 3.5z" fill="#40b040" stroke="#206020" stroke-width="0.8"/><path d="M1 5.5l7.5-3.5 7.5 3.5-7.5 3.5z" fill="#c8c8c8" stroke="#505050" stroke-width="0.8"/><path d="M7.5 0v3h-2l3 3 3-3h-2v-3z" fill="#2f7de8"/></svg>
<svg style="left:110px;top:95px" width="5" height="3" viewBox="0 0 5 3"><path d="M0 0h5l-2.5 3z" fill="#000"/></svg>
<svg style="left:124px;top:88px" width="16" height="15" viewBox="0 0 16 15"><path d="M0.5 5.5v9h10" fill="none" stroke="#b8b8b8"/><rect x="2" y="1" width="1" height="1" fill="#c8c8c8"/><rect x="4" y="1" width="1" height="1" fill="#c8c8c8"/><rect x="6" y="1" width="1" height="1" fill="#c8c8c8"/><rect x="8" y="1" width="1" height="1" fill="#c8c8c8"/><rect x="10" y="1" width="1" height="1" fill="#c8c8c8"/><rect x="12" y="1" width="1" height="1" fill="#c8c8c8"/><rect x="14" y="1" width="1" height="1" fill="#c8c8c8"/><rect x="2" y="3" width="1" height="1" fill="#c8c8c8"/><rect x="4" y="3" width="1" height="1" fill="#c8c8c8"/><rect x="6" y="3" width="1" height="1" fill="#c8c8c8"/><rect x="8" y="3" width="1" height="1" fill="#c8c8c8"/><rect x="10" y="3" width="1" height="1" fill="#c8c8c8"/><rect x="12" y="3" width="1" height="1" fill="#c8c8c8"/><rect x="14" y="3" width="1" height="1" fill="#c8c8c8"/><rect x="2" y="5" width="1" height="1" fill="#c8c8c8"/><rect x="4" y="5" width="1" height="1" fill="#c8c8c8"/><rect x="6" y="5" width="1" height="1" fill="#c8c8c8"/><rect x="8" y="5" width="1" height="1" fill="#c8c8c8"/><rect x="10" y="5" width="1" height="1" fill="#c8c8c8"/><rect x="12" y="5" width="1" height="1" fill="#c8c8c8"/><rect x="14" y="5" width="1" height="1" fill="#c8c8c8"/><rect x="2" y="9" width="1" height="1" fill="#b0b0b0"/><rect x="4" y="9" width="1" height="1" fill="#b0b0b0"/><rect x="6" y="9" width="1" height="1" fill="#b0b0b0"/><rect x="8" y="9" width="1" height="1" fill="#b0b0b0"/><rect x="10" y="9" width="1" height="1" fill="#b0b0b0"/><rect x="2" y="11" width="1" height="1" fill="#b0b0b0"/><rect x="4" y="11" width="1" height="1" fill="#b0b0b0"/><rect x="6" y="11" width="1" height="1" fill="#b0b0b0"/><rect x="8" y="11" width="1" height="1" fill="#b0b0b0"/><rect x="10" y="11" width="1" height="1" fill="#b0b0b0"/><path d="M10 9l5 5M15 9l-5 5" stroke="#b0b0b0" stroke-width="2"/></svg>
<svg style="left:157px;top:88px" width="16" height="15" viewBox="0 0 16 15"><path d="M0 0h1v1h-1zM0 1h1v1h-1zM0 2h1v1h-1zM0 3h1v1h-1zM0 4h1v1h-1zM1 4h1v1h-1zM2 4h1v1h-1zM5 0h1v1h-1zM4 1h1v1h-1zM6 1h1v1h-1zM4 2h1v1h-1zM6 2h1v1h-1zM4 3h1v1h-1zM6 3h1v1h-1zM5 4h1v1h-1zM9 0h1v1h-1zM8 1h1v1h-1zM10 1h1v1h-1zM8 2h1v1h-1zM9 2h1v1h-1zM10 2h1v1h-1zM8 3h1v1h-1zM10 3h1v1h-1zM8 4h1v1h-1zM10 4h1v1h-1zM12 0h1v1h-1zM13 0h1v1h-1zM12 1h1v1h-1zM14 1h1v1h-1zM12 2h1v1h-1zM14 2h1v1h-1zM12 3h1v1h-1zM14 3h1v1h-1zM12 4h1v1h-1zM13 4h1v1h-1z" fill="#555"/><path d="M2 6h4v3h2l-4 5-4-5h2z" fill="#b4b4b4"/><path d="M9.5 6h4v3h2l-4 5-4-5h2z" fill="#b4b4b4"/><rect x="4.5" y="6" width="6" height="4" fill="#c4c4c4"/></svg>
<div class="t" id="t40" style="left:188.5px;top:92px;transform:scaleX(0.86);transform-origin:0 0;">CM0_LE</div>
<div class="a" style="left:317px;top:89px;width:14px;height:17px;background:#e1e1e1;border:1px solid #adadad"></div>
<svg style="left:320px;top:96px" width="8" height="5" viewBox="0 0 8 5"><path d="M0.5 0.5l3.5 3.5 3.5-3.5" fill="none" stroke="#606060"/></svg>
<div class="a" style="left:528px;top:55px;width:4px;height:120px;background:linear-gradient(to right,rgba(0,0,0,.40),rgba(0,0,0,.22) 40%,rgba(0,0,0,.05));-webkit-mask:linear-gradient(to bottom,transparent,#000 6px)"></div>
<div class="a" style="left:329px;top:175px;width:199px;height:4px;background:linear-gradient(to bottom,rgba(0,0,0,.40),rgba(0,0,0,.22) 40%,rgba(0,0,0,.05));-webkit-mask:linear-gradient(to right,transparent,#000 6px)"></div>
<div class="a" style="left:528px;top:175px;width:4px;height:4px;background:radial-gradient(circle at 0 0,rgba(0,0,0,.38),rgba(0,0,0,.04) 4px,transparent 4.5px);"></div>
<div class="a" style="left:325px;top:51px;width:203px;height:124px;background:#f0f0f0;border:1px solid #979797;border-right-color:#6c6c6c;border-bottom-color:#6c6c6c"></div>
<div class="a" style="left:326px;top:52px;width:201px;height:1px;background:#fafafa;"></div>
<div class="a" style="left:326px;top:52px;width:1px;height:122px;background:#fafafa;"></div>
<div class="a" style="left:526px;top:52px;width:1px;height:122px;background:#fafafa;"></div>
<div class="a" style="left:326px;top:173px;width:201px;height:1px;background:#fafafa;"></div>
<div class="t" id="t41" style="left:356.5px;top:59px;;letter-spacing:-0.343px;">Set-up PC-Lint...</div>
<div class="t" id="t42" style="left:355.5px;top:81px;color:#6d6d6d;letter-spacing:0.334px;">Lint</div>
<div class="a" style="left:327px;top:98px;width:199px;height:22px;border:1px solid #f5b000;border-radius:2px;background:linear-gradient(#fdf0e2 0,#fbdcbf 40%,#fdc65c 42%,#fde6a0 100%);box-shadow:inset 0 0 0 1px rgba(255,255,255,0.6)"></div>
<div class="t" id="t43" style="left:356.5px;top:103px;;letter-spacing:-0.270px;">Lint All C/C++ Source Files</div>
<div class="a" style="left:351px;top:123px;width:174px;height:1px;background:#d7d7d7;"></div>
<div class="a" style="left:351px;top:124px;width:174px;height:1px;background:#ffffff;"></div>
<div class="t" id="t44" style="left:357.5px;top:133px;;letter-spacing:-0.158px;">Configure Merge Tool...</div>
<div class="t" id="t45" style="left:357.5px;top:155px;;letter-spacing:-0.319px;">Customize Tools Menu...</div>
</body></html>
